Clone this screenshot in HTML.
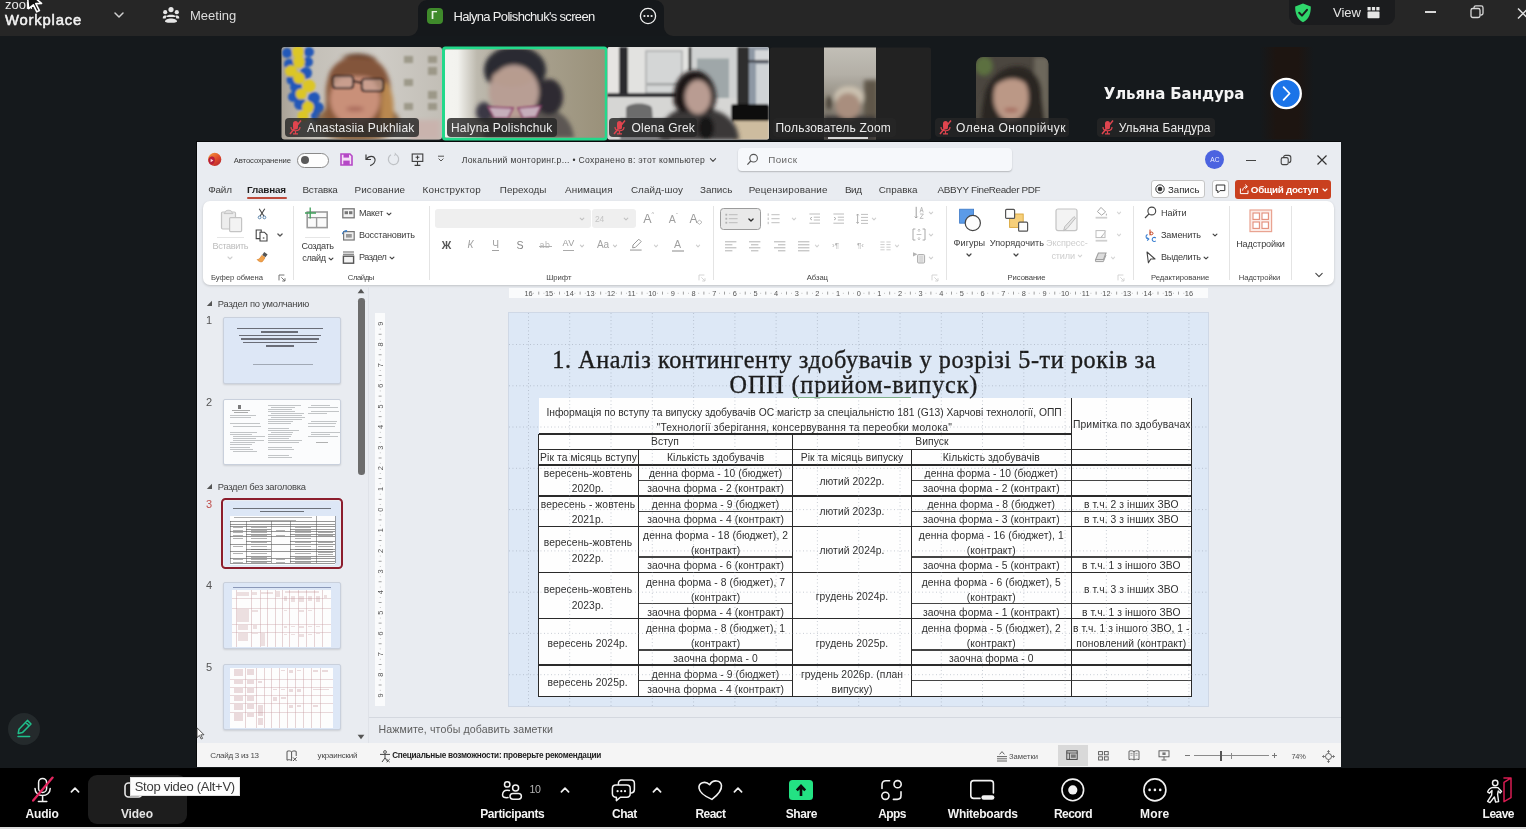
<!DOCTYPE html>
<html lang="uk">
<head>
<meta charset="utf-8">
<title>Zoom Workplace</title>
<style>
*{box-sizing:border-box;margin:0;padding:0}
html,body{width:1526px;height:829px;overflow:hidden;background:#15191c;font-family:"Liberation Sans",sans-serif;}
.abs{position:absolute}
#root{position:relative;width:1526px;height:829px;overflow:hidden;background:#15191c}
.t{position:absolute;white-space:nowrap;line-height:1}
#root{opacity:0.999}
</style>
</head>
<body>
<div id="root">
<div class="abs" style="left:0px;top:0px;width:1526px;height:36px;background:#262626;"></div>
<!-- top bar content -->
<div class="t" style="left:5px;top:-2.4px;font-size:13px;color:#e8e8e8;letter-spacing:0px">zoom</div>

<svg class="abs" style="left:25px;top:-9px" width="22" height="22" viewBox="0 0 22 22"><path d="M2 0 L16.5 12.4 L10.8 12.6 L14.4 19.6 L11.8 20.8 L8.4 13.8 L3.6 17.6 Z" fill="#111" stroke="#fff" stroke-width="1.6" stroke-linejoin="round"/></svg>
<svg class="abs" style="left:113px;top:10px" width="12" height="10" viewBox="0 0 12 10"><path d="M2 3 L6 7 L10 3" fill="none" stroke="#d0d0d0" stroke-width="1.5" stroke-linecap="round" stroke-linejoin="round"/></svg>
<svg class="abs" style="left:162px;top:6px" width="18" height="18" viewBox="0 0 18 18" fill="#e6e6e6"><circle cx="9" cy="3.6" r="2.6"/><circle cx="3.2" cy="6.2" r="2.1"/><circle cx="14.8" cy="6.2" r="2.1"/><path d="M4.5 10.5 C4.5 8 13.5 8 13.5 10.5 L13.5 11 L4.5 11Z"/><path d="M3 15.5 C3 11.5 15 11.5 15 15.5 C15 17.3 3 17.3 3 15.5Z"/><path d="M0.8 11.6 C0.8 9.6 3.6 9.3 4.6 9.8 L3.6 12.4 L0.8 12.4Z"/><path d="M17.2 11.6 C17.2 9.6 14.4 9.3 13.4 9.8 L14.4 12.4 L17.2 12.4Z"/></svg>
<div class="t" style="left:190px;top:9px;font-size:13px;color:#dcdcdc">Meeting</div>
<!-- screen tab -->
<div class="abs" style="left:418px;top:0;width:246px;height:36px;background:#15181b;border-radius:9px 9px 0 0"></div>
<svg class="abs" style="left:409px;top:27px" width="9" height="9" viewBox="0 0 9 9"><path d="M9 0 L9 9 L0 9 A9 9 0 0 0 9 0Z" fill="#15181b"/></svg>
<svg class="abs" style="left:664px;top:27px" width="9" height="9" viewBox="0 0 9 9"><path d="M0 0 L0 9 L9 9 A9 9 0 0 1 0 0Z" fill="#15181b"/></svg>
<div class="abs" style="left:427px;top:8px;width:16px;height:16px;border-radius:4px;background:#3f8a2b"></div>
<div class="t" style="left:431px;top:10px;font-size:11px;color:#e9f3e4;font-weight:700">Г</div>

<svg class="abs" style="left:639px;top:7px" width="18" height="18" viewBox="0 0 18 18"><circle cx="9" cy="9" r="7.6" fill="none" stroke="#f0f0f0" stroke-width="1.3"/><circle cx="5.4" cy="9" r="1.1" fill="#f0f0f0"/><circle cx="9" cy="9" r="1.1" fill="#f0f0f0"/><circle cx="12.6" cy="9" r="1.1" fill="#f0f0f0"/></svg>
<!-- right pill -->
<div class="abs" style="left:1289px;top:-8px;width:106px;height:33px;border-radius:9px;background:#1b1c1e"></div>
<svg class="abs" style="left:1294px;top:3px" width="18" height="20" viewBox="0 0 18 20"><path d="M9 0.5 L16.8 3.4 C17 10 15 16 9 19.3 C3 16 1 10 1.2 3.4Z" fill="#2fd66b"/><path d="M5.2 9.8 L8 12.6 L13 6.8" fill="none" stroke="#1b1c1e" stroke-width="2" stroke-linecap="round" stroke-linejoin="round"/></svg>
<div class="t" style="left:1333px;top:6px;font-size:13px;color:#e6e6e6">View</div>
<svg class="abs" style="left:1367px;top:7px" width="13" height="12" viewBox="0 0 13 12" fill="#e6e6e6"><rect x="0.5" y="0" width="3.2" height="3.4"/><rect x="4.9" y="0" width="3.2" height="3.4"/><rect x="9.3" y="0" width="3.2" height="3.4"/><rect x="0.5" y="4.6" width="12" height="6.6" rx="0.8"/></svg>
<div class="abs" style="left:1425px;top:11px;width:11px;height:1.6px;background:#d8d8d8"></div>
<svg class="abs" style="left:1470px;top:5px" width="14" height="14" viewBox="0 0 14 14" fill="none" stroke="#d8d8d8" stroke-width="1.3"><rect x="1" y="3.5" width="9" height="9" rx="1.8"/><path d="M4 3.2 V2.6 A1.8 1.8 0 0 1 5.8 0.9 H11.2 A1.8 1.8 0 0 1 13 2.7 V8.2 A1.8 1.8 0 0 1 11.2 10 H10.4"/></svg>
<svg class="abs" style="left:1517px;top:8px" width="12" height="11" viewBox="0 0 12 11"><path d="M1 0.5 L11 10.5 M11 0.5 L1 10.5" stroke="#e0e0e0" stroke-width="1.5"/></svg>

<div class="t" style='left:453.5px;top:9.75px;font-size:13px;color:#f0f0f0;letter-spacing:-0.675px;'>Halyna Polishchuk's screen</div>
<div class="t" style='left:5px;top:12.96px;font-size:14.8px;color:#f4f4f4;letter-spacing:0.818px;-webkit-text-stroke:0.5px #f4f4f4;'>Workplace</div>
<svg class="abs" style="left:270px;top:40px" width="1060" height="104" viewBox="270 40 1060 104">
<defs>
<filter id="b1" x="-20%" y="-20%" width="140%" height="140%"><feGaussianBlur stdDeviation="1.2"/></filter>
<filter id="b2" x="-20%" y="-20%" width="140%" height="140%"><feGaussianBlur stdDeviation="2.2"/></filter>
<filter id="b3" x="-20%" y="-20%" width="140%" height="140%"><feGaussianBlur stdDeviation="4"/></filter>
<clipPath id="c1"><rect x="281.5" y="47" width="160.5" height="92.5" rx="3"/></clipPath>
<clipPath id="c2"><rect x="445" y="49.5" width="159.5" height="88" rx="1"/></clipPath>
<clipPath id="c3"><rect x="607.5" y="47" width="161.5" height="92.5" rx="2"/></clipPath>
<clipPath id="c4"><rect x="824" y="47.5" width="52" height="92"/></clipPath>
<clipPath id="c5"><rect x="976" y="57" width="72.5" height="73" rx="7"/></clipPath>
<linearGradient id="g1" x1="0" x2="1" y1="0" y2="0"><stop offset="0" stop-color="#a9a296"/><stop offset="0.2" stop-color="#c4c0b8"/><stop offset="0.6" stop-color="#cfccc6"/><stop offset="1" stop-color="#c2beb6"/></linearGradient>
<linearGradient id="g2" x1="0" x2="1" y1="0" y2="0"><stop offset="0" stop-color="#f4f4f0"/><stop offset="0.08" stop-color="#f2f2ee"/><stop offset="0.2" stop-color="#bdb9ae"/><stop offset="0.5" stop-color="#aaa391"/><stop offset="1" stop-color="#9a917a"/></linearGradient>
<linearGradient id="g4" x1="0" x2="0" y1="0" y2="1"><stop offset="0" stop-color="#c2bfb7"/><stop offset="0.3" stop-color="#b3afa6"/><stop offset="0.6" stop-color="#8d877b"/><stop offset="1" stop-color="#5a554e"/></linearGradient>
</defs>
<!-- tile 1 -->
<g clip-path="url(#c1)">
<rect x="281" y="47" width="162" height="93" fill="url(#g1)"/>
<g filter="url(#b1)">
<g fill="#8f8b78" opacity="0.75"><rect x="404" y="56" width="9" height="7"/><rect x="404" y="79" width="9" height="7"/><rect x="404" y="103" width="9" height="7"/><rect x="428" y="67" width="9" height="8"/><rect x="428" y="91" width="9" height="8"/><rect x="428" y="56" width="9" height="7"/><rect x="428" y="103" width="9" height="7"/></g>
<g fill="#2358b8"><circle cx="287" cy="53" r="5"/><circle cx="309" cy="52" r="5"/><circle cx="289" cy="64" r="5"/><circle cx="308" cy="62" r="5"/><circle cx="306" cy="73" r="6"/><circle cx="291" cy="80" r="4.5"/><circle cx="296" cy="87" r="6"/><circle cx="293" cy="97" r="5"/><circle cx="300" cy="104" r="6"/><circle cx="314" cy="98" r="6"/><circle cx="318" cy="108" r="6"/><circle cx="316" cy="116" r="5"/></g>
<g fill="#dcc626"><circle cx="298" cy="52" r="6"/><circle cx="299" cy="62" r="6"/><circle cx="291" cy="71" r="6"/><circle cx="299" cy="78" r="6"/><circle cx="309" cy="86" r="6.5"/><circle cx="301" cy="94" r="5.5"/><circle cx="308" cy="107" r="6"/><circle cx="303" cy="116" r="5.5"/></g>
</g>
<g filter="url(#b2)">
<ellipse cx="358" cy="122" rx="42" ry="20" fill="#8d6a4a"/>
<path d="M326 98 C322 42 395 40 391 98 L393 124 L325 124Z" fill="#8a5a3a"/>
<path d="M383 80 C394 84 396 112 391 128 L380 128Z" fill="#b98850"/>
<ellipse cx="355" cy="99" rx="25" ry="26" fill="#c99079"/>
<path d="M328 82 C328 48 390 48 388 84 C372 75 346 73 328 82Z" fill="#83543a"/>
<path d="M340 58 C350 52 368 52 378 60 C366 57 352 56 340 58Z" fill="#5e3a28"/>
<ellipse cx="355" cy="109" rx="9" ry="2.6" fill="#a9695a"/>
</g>
<g filter="url(#b1)" fill="#c9a9a0" fill-opacity="0.55" stroke="#2b1d1d" stroke-width="1.7"><rect x="333" y="76" width="20" height="12" rx="3"/><rect x="362" y="79" width="21" height="12" rx="3"/><path d="M353 81 L362 83" fill="none"/></g>
<rect x="410" y="120" width="30" height="20" fill="#c9b3ad" filter="url(#b2)"/>
</g>
<!-- tile 2 -->
<rect x="443.5" y="48" width="162.5" height="91" rx="2" fill="#9a917a" stroke="#23d98b" stroke-width="3"/>
<g clip-path="url(#c2)">
<rect x="445" y="49" width="160" height="89" fill="url(#g2)"/>
<g filter="url(#b2)">
<path d="M484 138 C480 110 500 100 520 104 C548 104 572 112 574 138Z" fill="#5c5652"/>
<ellipse cx="515" cy="70" rx="31" ry="24" fill="#2b2a30"/>
<ellipse cx="549" cy="97" rx="14" ry="18" fill="#2e2b31"/>
<ellipse cx="484" cy="112" rx="8" ry="10" fill="#3a3744"/>
<ellipse cx="514" cy="92" rx="25" ry="27" fill="#b89e94"/>
<ellipse cx="512" cy="78" rx="20" ry="9" fill="#b79c8f"/>
</g>
<g filter="url(#b1)" fill="#c6aebb" stroke="#8e3f6c" stroke-width="1.6"><path d="M488 107 L513 108 L508 118 L494 118Z"/><path d="M518 108 L541 106 L536 117 L523 118Z"/></g>
</g>
<!-- tile 3 -->
<g clip-path="url(#c3)">
<rect x="607" y="47" width="163" height="93" fill="#dcdcda"/>
<g filter="url(#b1)">
<rect x="607" y="47" width="12" height="46" fill="#e6e4e2"/>
<rect x="628" y="47" width="60" height="46" fill="#e2e2e0"/>
<rect x="646" y="51" width="36" height="42" fill="#d4d6d6" stroke="#a9abab" stroke-width="1.5"/>
<rect x="647" y="83" width="34" height="2.5" fill="#a2a4a4"/>
<rect x="619" y="47" width="9" height="49" fill="#2b2b2e"/>
<rect x="607" y="93" width="70" height="4" fill="#2e2e30"/>
<rect x="688.5" y="47" width="3" height="24" fill="#333"/>
<rect x="692" y="47" width="45" height="58" fill="#d0d2d2"/>
<rect x="697" y="58.5" width="32" height="41" fill="#9fa7a9"/>
<rect x="737" y="47" width="12" height="59" fill="#2d2d2d"/>
<rect x="749" y="47" width="20" height="59" fill="#8e98a4"/>
<rect x="755" y="50" width="14" height="11" fill="#d5d8da"/>
<rect x="756" y="64" width="13" height="40" fill="#cfd3d6"/>
<rect x="749" y="60" width="20" height="2.5" fill="#3a3e44"/>
<rect x="607" y="98" width="130" height="42" fill="#d6d6d4"/>
<path d="M626 108 C628 102 650 102 652 108 L653 122 L626 122Z" fill="#6c6c6c"/>
<rect x="620" y="118" width="50" height="22" fill="#77777a"/>
<rect x="731" y="104" width="38" height="19" rx="3" fill="#0d0d0d"/>
<rect x="733" y="121" width="36" height="19" fill="#cdbc9f"/>
</g>
<g filter="url(#b2)">
<path d="M660 140 C660 112 680 106 698 108 C722 108 738 120 739 140Z" fill="#3b3737"/>
<path d="M674 104 C670 60 716 60 716 100 L712 112 L680 112Z" fill="#1f1819"/>
<ellipse cx="698" cy="97" rx="13" ry="17" fill="#b99c92"/>
<ellipse cx="706" cy="128" rx="8" ry="12" fill="#151313"/>
</g>
</g>
<!-- tile 4 -->
<rect x="770" y="47.5" width="161" height="92" rx="2" fill="#222222"/>
<g clip-path="url(#c4)">
<rect x="824" y="47" width="52" height="93" fill="url(#g4)"/>
<g filter="url(#b2)">
<rect x="864" y="80" width="14" height="60" fill="#5e564a"/>
<rect x="824" y="116" width="52" height="24" fill="#3b3939"/>
<ellipse cx="849" cy="97" rx="15" ry="11" fill="#cbc1b0"/>
<ellipse cx="848" cy="106" rx="12.5" ry="13" fill="#a98e7e"/>
<ellipse cx="829" cy="103" rx="3" ry="7" fill="#4a4238"/>
</g>
<rect x="828" y="137" width="40" height="2" fill="#d8d8d8"/>
</g>
<!-- tile 5 -->
<g clip-path="url(#c5)">
<rect x="976" y="57" width="73" height="73" fill="#4b463f"/>
<g filter="url(#b2)">
<ellipse cx="984" cy="66" rx="9" ry="10" fill="#5c7040"/>
<rect x="1034" y="57" width="15" height="73" fill="#6d675b"/>
<ellipse cx="990" cy="110" rx="10" ry="20" fill="#5a564e"/>
<path d="M982 130 C972 56 1044 48 1042 98 L1046 130Z" fill="#2a2523"/>
<ellipse cx="1011" cy="97" rx="17.5" ry="24" fill="#bb9886"/>
<path d="M991 90 C992 62 1030 62 1031 90 C1022 74 1002 76 991 90Z" fill="#2a2523"/>
<ellipse cx="1011" cy="110" rx="7" ry="2" fill="#a26356"/>
</g>
</g>
<!-- brownish next tile hint -->
<defs><linearGradient id="gb" x1="0" x2="1" y1="0" y2="0"><stop offset="0" stop-color="#1d1511" stop-opacity="0"/><stop offset="0.3" stop-color="#1d1511" stop-opacity="1"/><stop offset="0.7" stop-color="#1d1511" stop-opacity="1"/><stop offset="1" stop-color="#1d1511" stop-opacity="0"/></linearGradient></defs><rect x="1260" y="47" width="54" height="92.5" fill="url(#gb)"/>
<!-- next button -->
<circle cx="1286.2" cy="93.5" r="14.6" fill="#1b74e8" stroke="#ffffff" stroke-width="2.3"/>
<path d="M1283.6 87.2 L1289.6 93.5 L1283.6 99.8" fill="none" stroke="#fff" stroke-width="1.8" stroke-linecap="round" stroke-linejoin="round"/>
</svg>

<div class="abs" style="left:285px;top:117.5px;width:134px;height:19.5px;background:rgba(38,38,38,0.82);border-radius:4px"></div>
<svg class="abs" style="left:288px;top:119px" width="15" height="17" viewBox="0 0 15 17"><rect x="5" y="2" width="5" height="8.5" rx="2.5" fill="#e0454f"/><path d="M3 8 C3 13 12 13 12 8 M7.5 12 V14.5 M5 14.8 H10" fill="none" stroke="#e0454f" stroke-width="1.2"/><path d="M2 15 L13 1.5" stroke="#e0454f" stroke-width="1.5"/></svg>
<div class="t" style='left:307px;top:121.70px;font-size:12px;color:#ececec;letter-spacing:0.181px;'>Anastasiia Pukhliak</div>
<div class="abs" style="left:447px;top:117.5px;width:110px;height:19.5px;background:rgba(38,38,38,0.82);border-radius:4px"></div>
<div class="t" style='left:451px;top:121.70px;font-size:12px;color:#ececec;letter-spacing:0.164px;'>Halyna Polishchuk</div>
<div class="abs" style="left:609px;top:117.5px;width:88px;height:19.5px;background:rgba(38,38,38,0.82);border-radius:4px"></div>
<svg class="abs" style="left:612px;top:119px" width="15" height="17" viewBox="0 0 15 17"><rect x="5" y="2" width="5" height="8.5" rx="2.5" fill="#e0454f"/><path d="M3 8 C3 13 12 13 12 8 M7.5 12 V14.5 M5 14.8 H10" fill="none" stroke="#e0454f" stroke-width="1.2"/><path d="M2 15 L13 1.5" stroke="#e0454f" stroke-width="1.5"/></svg>
<div class="t" style='left:631.5px;top:121.70px;font-size:12px;color:#ececec;letter-spacing:0.214px;'>Olena Grek</div>
<div class="abs" style="left:772.5px;top:117.5px;width:123.5px;height:19.5px;background:rgba(38,38,38,0.82);border-radius:4px"></div>
<div class="t" style='left:775.5px;top:121.70px;font-size:12px;color:#ececec;letter-spacing:0.212px;'>Пользователь Zoom</div>
<div class="abs" style="left:934.5px;top:117.5px;width:134.5px;height:19.5px;background:rgba(38,38,38,0.82);border-radius:4px"></div>
<svg class="abs" style="left:937.5px;top:119px" width="15" height="17" viewBox="0 0 15 17"><rect x="5" y="2" width="5" height="8.5" rx="2.5" fill="#e0454f"/><path d="M3 8 C3 13 12 13 12 8 M7.5 12 V14.5 M5 14.8 H10" fill="none" stroke="#e0454f" stroke-width="1.2"/><path d="M2 15 L13 1.5" stroke="#e0454f" stroke-width="1.5"/></svg>
<div class="t" style='left:956px;top:121.70px;font-size:12px;color:#ececec;letter-spacing:0.488px;'>Олена Онопрійчук</div>
<div class="abs" style="left:1096.5px;top:117.5px;width:118px;height:19.5px;background:rgba(38,38,38,0.82);border-radius:4px"></div>
<svg class="abs" style="left:1099.5px;top:119px" width="15" height="17" viewBox="0 0 15 17"><rect x="5" y="2" width="5" height="8.5" rx="2.5" fill="#e0454f"/><path d="M3 8 C3 13 12 13 12 8 M7.5 12 V14.5 M5 14.8 H10" fill="none" stroke="#e0454f" stroke-width="1.2"/><path d="M2 15 L13 1.5" stroke="#e0454f" stroke-width="1.5"/></svg>
<div class="t" style='left:1118.7px;top:121.70px;font-size:12px;color:#ececec;letter-spacing:0.092px;'>Ульяна Бандура</div>
<div class="t" style='left:1103.7px;top:86.75px;font-size:15px;color:#f4f4f4;font-weight:700;font-family:"DejaVu Sans","Liberation Sans",sans-serif;letter-spacing:-0.110px;'>Ульяна Бандура</div>
<div class="abs" style="left:197px;top:142px;width:1143.5px;height:625px;background:#e9ecf1;box-shadow:-0.6px -0.6px 0 0.4px #07090a"></div>
<svg class="abs" style="left:207px;top:152px" width="15" height="15" viewBox="0 0 15 15"><defs><linearGradient id="pl" x1="0.1" y1="0" x2="0.9" y2="1"><stop offset="0" stop-color="#f39a3e"/><stop offset="0.5" stop-color="#e3502a"/><stop offset="1" stop-color="#b3202f"/></linearGradient></defs><circle cx="7.7" cy="7.4" r="6.6" fill="url(#pl)"/><path d="M1.6 9.8 C0.8 6.4 3 4.2 5.6 4.6 C7.6 5 8.2 7 7.8 9 C7.4 11.4 5.4 13 3.6 12.6 C2.6 12 2 11 1.6 9.8Z" fill="#b81f38"/><path d="M3.6 6.8 L6.4 8.5 L3.6 10.3Z" fill="#fbd5dc"/></svg>
<div class="t" style='left:233.7px;top:156.66px;font-size:7.7px;color:#3a3a3a;letter-spacing:-0.094px;'>Автосохранение</div>
<div class="abs" style="left:297px;top:152.5px;width:32px;height:15px;border-radius:8px;background:#fdfdfd;border:1px solid #8a8a8a"></div><div class="abs" style="left:300.5px;top:155.7px;width:8.6px;height:8.6px;border-radius:5px;background:#5a5a5a"></div>
<svg class="abs" style="left:340px;top:153px" width="13" height="13" viewBox="0 0 13 13"><path d="M1 1 H10 L12 3 V12 H1Z" fill="#f4def6" stroke="#b548c6" stroke-width="1.6"/><rect x="3.5" y="1" width="5.5" height="3.6" fill="#b548c6"/><rect x="3.3" y="7.6" width="6.4" height="4.4" fill="#b548c6"/></svg>
<svg class="abs" style="left:363px;top:152px" width="15" height="15" viewBox="0 0 15 15"><path d="M3 2.5 V7.5 H8" fill="none" stroke="#3c3c3c" stroke-width="1.2"/><path d="M3.2 7.3 C6 3.2 11 3.4 12 7.2 C12.6 10 10 12.6 7.2 13.6" fill="none" stroke="#3c3c3c" stroke-width="1.2"/></svg>
<svg class="abs" style="left:386px;top:152px" width="15" height="15" viewBox="0 0 15 15"><path d="M9.5 2.2 C12.8 3.6 13.6 8 11.4 10.8 C9 13.6 4.6 13 3 9.8 C2 7.4 2.6 4.4 5 2.8" fill="none" stroke="#bfc2c6" stroke-width="1.2"/><path d="M9 0.8 L9.8 2.6 L8 3.4" fill="none" stroke="#bfc2c6" stroke-width="1"/></svg>
<svg class="abs" style="left:411px;top:153px" width="13" height="14" viewBox="0 0 13 14"><rect x="1.2" y="1" width="10.6" height="7.4" fill="none" stroke="#3c3c3c" stroke-width="1.1"/><path d="M6.5 8.4 V12 M3.6 12.4 H9.4 M6.5 2.6 V6.4 M4.6 4.2 H8.4" stroke="#3c3c3c" stroke-width="1.1" fill="none"/></svg>
<svg class="abs" style="left:437px;top:155px" width="8" height="8" viewBox="0 0 8 8"><path d="M1 1.2 H7" stroke="#555" stroke-width="1"/><path d="M1.6 3.6 L4 6 L6.4 3.6" fill="none" stroke="#555" stroke-width="1"/></svg>
<div class="t" style='left:461.8px;top:156.17px;font-size:8.6px;color:#3a3a3a;letter-spacing:0.327px;'>Локальний монторинг.р... • Сохранено в: этот компьютер</div>
<svg class="abs" style="left:708.6px;top:157.2px" width="8" height="6" viewBox="0 0 8 6"><path d="M1.4 1.7 L4 4.3 L6.6 1.7" fill="none" stroke="#444" stroke-width="1.1" stroke-linecap="round" stroke-linejoin="round"/></svg>
<div class="abs" style="left:737.5px;top:148.4px;width:274px;height:22.8px;border-radius:4px;background:#f6f8fb;box-shadow:0 1px 1.5px rgba(0,0,0,0.22)"></div>
<svg class="abs" style="left:746px;top:153px" width="13" height="13" viewBox="0 0 13 13"><circle cx="7.6" cy="5.2" r="3.8" fill="none" stroke="#555" stroke-width="1.1"/><path d="M4.8 8 L1.4 11.6" stroke="#555" stroke-width="1.2"/></svg>
<div class="t" style='left:768.2px;top:155.31px;font-size:9.8px;color:#666;letter-spacing:0.429px;'>Поиск</div>
<div class="abs" style="left:1205.3px;top:150.4px;width:19px;height:19px;border-radius:10px;background:#4b63e0"></div>
<div class="t" style='left:1210.2px;top:157.27px;font-size:6.6px;color:#e9ecff;letter-spacing:0.114px;'>AC</div>
<div class="abs" style="left:1246px;top:159.6px;width:9.5px;height:1.2px;background:#444;"></div>
<svg class="abs" style="left:1280px;top:154px" width="12" height="12" viewBox="0 0 12 12"><rect x="1.2" y="3.6" width="7" height="7" rx="1.6" fill="none" stroke="#444" stroke-width="1.1"/><path d="M3.6 3.4 C3.6 2 4.4 1.4 5.6 1.4 H8.6 C10 1.4 10.8 2.2 10.8 3.6 V6.6 C10.8 7.8 10.2 8.6 8.8 8.6" fill="none" stroke="#444" stroke-width="1.1"/></svg>
<svg class="abs" style="left:1316px;top:154px" width="12" height="12" viewBox="0 0 12 12"><path d="M1.5 1.5 L10.5 10.5 M10.5 1.5 L1.5 10.5" stroke="#333" stroke-width="1.2"/></svg>
<div class="t" style='left:208.2px;top:185.06px;font-size:9.9px;color:#3b3b3b;letter-spacing:-0.170px;'>Файл</div>
<div class="t" style='left:302.5px;top:185.06px;font-size:9.9px;color:#3b3b3b;letter-spacing:-0.246px;'>Вставка</div>
<div class="t" style='left:354.6px;top:185.06px;font-size:9.9px;color:#3b3b3b;letter-spacing:0.085px;'>Рисование</div>
<div class="t" style='left:422.6px;top:185.06px;font-size:9.9px;color:#3b3b3b;letter-spacing:0.172px;'>Конструктор</div>
<div class="t" style='left:499.8px;top:185.06px;font-size:9.9px;color:#3b3b3b;letter-spacing:0.046px;'>Переходы</div>
<div class="t" style='left:565.1px;top:185.06px;font-size:9.9px;color:#3b3b3b;letter-spacing:0.155px;'>Анимация</div>
<div class="t" style='left:630.9px;top:185.06px;font-size:9.9px;color:#3b3b3b;letter-spacing:0.100px;'>Слайд-шоу</div>
<div class="t" style='left:700px;top:185.06px;font-size:9.9px;color:#3b3b3b;'>Запись</div>
<div class="t" style='left:748.7px;top:185.06px;font-size:9.9px;color:#3b3b3b;letter-spacing:0.202px;'>Рецензирование</div>
<div class="t" style='left:844.9px;top:185.06px;font-size:9.9px;color:#3b3b3b;letter-spacing:-0.392px;'>Вид</div>
<div class="t" style='left:878.7px;top:185.06px;font-size:9.9px;color:#3b3b3b;letter-spacing:0.007px;'>Справка</div>
<div class="t" style='left:937.6px;top:185.06px;font-size:9.9px;color:#3b3b3b;letter-spacing:-0.350px;'>ABBYY FineReader PDF</div>
<div class="t" style='left:247px;top:185.06px;font-size:9.9px;color:#1f1f1f;font-weight:700;letter-spacing:-0.196px;'>Главная</div>
<div class="abs" style="left:247px;top:196.5px;width:40px;height:2.3px;background:#bd4a3a;border-radius:1px"></div>
<div class="abs" style="left:1151px;top:180px;width:54px;height:18px;border-radius:3px;background:#fdfdfd;border:1px solid #c6c6c6"></div>
<svg class="abs" style="left:1155px;top:184px" width="10" height="10" viewBox="0 0 10 10"><circle cx="5" cy="5" r="4.2" fill="none" stroke="#333" stroke-width="1"/><circle cx="5" cy="5" r="2.3" fill="#333"/></svg>
<div class="t" style='left:1168px;top:185.02px;font-size:9.6px;color:#2b2b2b;'>Запись</div>
<div class="abs" style="left:1211.5px;top:180px;width:17.5px;height:18px;border-radius:3px;background:#fdfdfd;border:1px solid #c6c6c6"></div>
<svg class="abs" style="left:1215px;top:184px" width="11" height="10" viewBox="0 0 11 10"><path d="M1.2 1 H9.8 V6.6 H5 L2.8 8.8 V6.6 H1.2Z" fill="none" stroke="#333" stroke-width="1"/></svg>
<div class="abs" style="left:1235px;top:180px;width:96px;height:18.5px;border-radius:3px;background:#c9401f"></div>
<svg class="abs" style="left:1239px;top:183px" width="11" height="12" viewBox="0 0 11 12"><path d="M1.4 5.4 V10.6 H9 V7.4" fill="none" stroke="#fff" stroke-width="1"/><path d="M3.6 7.6 C3.8 4.8 5.8 3.6 7.8 3.6 M6.2 1.6 L8.4 3.6 L6.2 5.6" fill="none" stroke="#fff" stroke-width="1"/></svg>
<div class="t" style='left:1250.8px;top:184.91px;font-size:9.8px;color:#fff;font-weight:700;letter-spacing:-0.245px;'>Общий доступ</div>
<svg class="abs" style="left:1321.3px;top:187px" width="8" height="6" viewBox="0 0 8 6"><path d="M2 2.0 L4 4.0 L6 2.0" fill="none" stroke="#fff" stroke-width="1.1" stroke-linecap="round" stroke-linejoin="round"/></svg>
<div class="abs" style="left:203px;top:200.6px;width:1130.6px;height:84.2px;border-radius:7px;background:#fff;box-shadow:0 1px 2.5px rgba(0,0,0,0.18)"></div>
<div class="abs" style="left:293.4px;top:206px;width:1px;height:74px;background:#e4e4e4;"></div>
<div class="abs" style="left:429.3px;top:206px;width:1px;height:74px;background:#e4e4e4;"></div>
<div class="abs" style="left:713.4px;top:206px;width:1px;height:74px;background:#e4e4e4;"></div>
<div class="abs" style="left:945.8px;top:206px;width:1px;height:74px;background:#e4e4e4;"></div>
<div class="abs" style="left:1132.6px;top:206px;width:1px;height:74px;background:#e4e4e4;"></div>
<div class="abs" style="left:1229.1px;top:206px;width:1px;height:74px;background:#e4e4e4;"></div>
<div class="abs" style="left:1291.4px;top:206px;width:1px;height:74px;background:#e4e4e4;"></div>
<svg class="abs" style="left:220px;top:208px" width="24" height="25" viewBox="0 0 24 25"><rect x="1.5" y="4" width="14" height="17" rx="1.2" fill="#ededed" stroke="#c4c4c4" stroke-width="1.2"/><path d="M5 4.4 C5 1.6 12 1.6 12 4.4 L13 5.6 H4Z" fill="#e2e2e2" stroke="#c4c4c4" stroke-width="1"/><rect x="9.6" y="9.6" width="12" height="14" rx="1" fill="#f3f3f3" stroke="#c4c4c4" stroke-width="1.2"/></svg>
<div class="abs" style="left:217px;top:237.3px;width:27px;height:1px;background:#e6e6e6;"></div>
<div class="t" style='left:212.6px;top:242.09px;font-size:9.1px;color:#bdbdbd;letter-spacing:-0.393px;'>Вставить</div>
<svg class="abs" style="left:225.6px;top:254.60000000000002px" width="8" height="6" viewBox="0 0 8 6"><path d="M2 2.0 L4 4.0 L6 2.0" fill="none" stroke="#cfcfcf" stroke-width="1.1" stroke-linecap="round" stroke-linejoin="round"/></svg>
<svg class="abs" style="left:256px;top:207.5px" width="12" height="12" viewBox="0 0 12 12"><path d="M3.2 0.8 L8 8.2 M8.8 0.8 L4 8.2" stroke="#444" stroke-width="1.1"/><circle cx="3.6" cy="9.4" r="1.4" fill="none" stroke="#5b86ad" stroke-width="1"/><circle cx="8.4" cy="9.4" r="1.4" fill="none" stroke="#5b86ad" stroke-width="1"/></svg>
<svg class="abs" style="left:255px;top:228.5px" width="14" height="13" viewBox="0 0 14 13"><path d="M1.2 1 H6.2 V9.6 H1.2Z" fill="#fff" stroke="#444" stroke-width="1.1"/><path d="M5 3.2 H9.4 L12 5.8 V12 H5Z" fill="#fff" stroke="#444" stroke-width="1.1"/><path d="M7.6 9 H9.6 M8.6 8 V10" stroke="#777" stroke-width="0.8"/></svg>
<svg class="abs" style="left:276px;top:232.2px" width="8" height="6" viewBox="0 0 8 6"><path d="M1.9 1.95 L4 4.05 L6.1 1.95" fill="none" stroke="#555" stroke-width="1.3" stroke-linecap="round" stroke-linejoin="round"/></svg>
<svg class="abs" style="left:256px;top:250.5px" width="13" height="12" viewBox="0 0 13 12"><path d="M8.2 1 L11.6 3.4 L9.4 6.2 L6.2 4Z" fill="#555"/><path d="M5.8 4.4 L9 6.8 L6.4 10.6 C4.6 11.4 2.4 10.4 1.2 8.6 C3 8.6 4.6 6.6 5.8 4.4Z" fill="#f2a24a" stroke="#d9812a" stroke-width="0.7"/></svg>
<div class="t" style='left:211px;top:273.96px;font-size:7.7px;color:#444;letter-spacing:-0.029px;'>Буфер обмена</div>
<svg class="abs" style="left:278px;top:274px" width="8" height="8" viewBox="0 0 8 8"><path d="M1 6.4 V1 H6.4" fill="none" stroke="#666" stroke-width="0.9"/><path d="M3.4 3.4 L7 7 M7 4.2 V7 H4.2" fill="none" stroke="#666" stroke-width="0.9"/></svg>
<svg class="abs" style="left:304px;top:206px" width="26" height="24" viewBox="0 0 26 24"><rect x="3.2" y="6" width="20" height="15.6" fill="#fafafa" stroke="#9b9b9b" stroke-width="1.6"/><path d="M3.2 11.6 H23.2 M12.6 11.6 V21.6" stroke="#9b9b9b" stroke-width="1.4"/><path d="M6.2 1.6 V12.6 M1 7 H12" stroke="#3f9f5a" stroke-width="1.3"/></svg>
<div class="abs" style="left:305px;top:237.3px;width:25px;height:1px;background:#e6e6e6;"></div>
<div class="t" style='left:301.4px;top:241.69px;font-size:9.1px;color:#3b3b3b;letter-spacing:-0.323px;'>Создать</div>
<div class="t" style='left:302.2px;top:253.89px;font-size:9.1px;color:#3b3b3b;letter-spacing:-0.339px;'>слайд</div>
<svg class="abs" style="left:326.5px;top:255.60000000000002px" width="8" height="6" viewBox="0 0 8 6"><path d="M2.1 2.05 L4 3.95 L5.9 2.05" fill="none" stroke="#444" stroke-width="1.2" stroke-linecap="round" stroke-linejoin="round"/></svg>
<svg class="abs" style="left:341.5px;top:207.5px" width="13" height="11" viewBox="0 0 13 11"><rect x="0.8" y="0.8" width="11.4" height="9" fill="#f2f2f2" stroke="#777" stroke-width="1.3"/><rect x="2.6" y="3.2" width="3.4" height="3" fill="#777"/><rect x="7" y="3.2" width="3.4" height="3" fill="#777"/></svg>
<div class="t" style='left:358.9px;top:209.09px;font-size:9.1px;color:#3b3b3b;letter-spacing:-0.290px;'>Макет</div>
<svg class="abs" style="left:384.7px;top:210.6px" width="8" height="6" viewBox="0 0 8 6"><path d="M2.1 2.05 L4 3.95 L5.9 2.05" fill="none" stroke="#444" stroke-width="1.2" stroke-linecap="round" stroke-linejoin="round"/></svg>
<svg class="abs" style="left:341.5px;top:229.5px" width="13" height="11" viewBox="0 0 13 11"><rect x="1.6" y="1.6" width="10.6" height="8.4" fill="#eee" stroke="#777" stroke-width="1.2"/><rect x="4" y="4" width="5.8" height="3.6" fill="#999"/><path d="M0.4 4.2 C0.6 1.4 3 0.4 4.6 0.8 M3.2 -0.2 L4.8 0.8 L3.6 2.2" fill="none" stroke="#2f7bd0" stroke-width="1"/></svg>
<div class="t" style='left:358.9px;top:231.09px;font-size:9.1px;color:#3b3b3b;letter-spacing:-0.203px;'>Восстановить</div>
<svg class="abs" style="left:341.5px;top:250.5px" width="13" height="13" viewBox="0 0 13 13"><path d="M1 1 H12 M1 3.2 H12" stroke="#666" stroke-width="1.1"/><rect x="1.4" y="5.2" width="10.2" height="7" fill="#f4f4f4" stroke="#555" stroke-width="1.4"/></svg>
<div class="t" style='left:358.9px;top:253.09px;font-size:9.1px;color:#3b3b3b;letter-spacing:-0.427px;'>Раздел</div>
<svg class="abs" style="left:387.9px;top:254.8px" width="8" height="6" viewBox="0 0 8 6"><path d="M2.1 2.05 L4 3.95 L5.9 2.05" fill="none" stroke="#444" stroke-width="1.2" stroke-linecap="round" stroke-linejoin="round"/></svg>
<div class="t" style='left:347.8px;top:274.36px;font-size:7.7px;color:#444;letter-spacing:-0.438px;'>Слайды</div>
<div class="abs" style="left:435.2px;top:209.4px;width:156px;height:19px;border-radius:3px;background:#efefef"></div><div class="abs" style="left:592.4px;top:209.4px;width:44px;height:19px;border-radius:3px;background:#efefef"></div>
<svg class="abs" style="left:577.7px;top:216.4px" width="8" height="6" viewBox="0 0 8 6"><path d="M2.2 2.1 L4 3.9 L5.8 2.1" fill="none" stroke="#c2c2c2" stroke-width="1.1" stroke-linecap="round" stroke-linejoin="round"/></svg>
<svg class="abs" style="left:621.5px;top:216.4px" width="8" height="6" viewBox="0 0 8 6"><path d="M2.2 2.1 L4 3.9 L5.8 2.1" fill="none" stroke="#c2c2c2" stroke-width="1.1" stroke-linecap="round" stroke-linejoin="round"/></svg>
<div class="t" style='left:595px;top:215.28px;font-size:8.4px;color:#c4c4c4;letter-spacing:-0.214px;'>24</div>
<div class="t" style='left:643.2px;top:212.82px;font-size:12.5px;color:#9a9a9a;letter-spacing:-0.544px;'>A</div>
<div class="t" style='left:651.5px;top:212.27px;font-size:5.5px;color:#aaa;'>^</div>
<div class="t" style='left:668.8px;top:214.47px;font-size:10.6px;color:#a0a0a0;letter-spacing:-0.478px;'>A</div>
<div class="t" style='left:676px;top:212.67px;font-size:5.5px;color:#aaa;'>ˇ</div>
<div class="t" style='left:689.4px;top:213.10px;font-size:12px;color:#9a9a9a;letter-spacing:-0.416px;'>A</div>
<svg class="abs" style="left:696px;top:219px" width="7" height="6" viewBox="0 0 7 6"><path d="M1 3.4 L3.4 1 L6 3.2 L3.6 5.4Z" fill="none" stroke="#aaa" stroke-width="0.8"/></svg>
<div class="t" style='left:441.7px;top:240.12px;font-size:10.5px;color:#555;font-weight:700;letter-spacing:0.900px;'>Ж</div>
<div class="t" style='left:467.6px;top:240.29px;font-size:10.2px;color:#a2a2a2;letter-spacing:-0.016px;font-style:italic;'>К</div>
<div class="t" style='left:492.2px;top:239.69px;font-size:10.2px;color:#a2a2a2;letter-spacing:-0.597px;'>Ч</div>
<div class="abs" style="left:491.5px;top:250.2px;width:7.8px;height:0.9px;background:#a2a2a2;"></div>
<div class="t" style='left:516.4px;top:240.07px;font-size:10.6px;color:#868686;letter-spacing:-0.478px;'>S</div>
<div class="t" style='left:539.6px;top:241.26px;font-size:8.8px;color:#b5b5b5;letter-spacing:0.502px;'>ab</div>
<div class="abs" style="left:538.5px;top:246px;width:13px;height:0.9px;background:#b0b0b0;"></div>
<div class="t" style='left:562.4px;top:239.35px;font-size:9px;color:#9c9c9c;letter-spacing:0.528px;'>AV</div>
<div class="abs" style="left:563px;top:250px;width:11px;height:0.8px;background:#aaa;"></div>
<svg class="abs" style="left:577.6px;top:242.6px" width="8" height="6" viewBox="0 0 8 6"><path d="M2.4 2.2 L4 3.8 L5.6 2.2" fill="none" stroke="#c8c8c8" stroke-width="1.1" stroke-linecap="round" stroke-linejoin="round"/></svg>
<div class="t" style='left:597px;top:240.40px;font-size:10px;color:#a2a2a2;letter-spacing:-0.217px;'>Aa</div>
<svg class="abs" style="left:610.7px;top:242.8px" width="8" height="6" viewBox="0 0 8 6"><path d="M2.4 2.2 L4 3.8 L5.6 2.2" fill="none" stroke="#c8c8c8" stroke-width="1.1" stroke-linecap="round" stroke-linejoin="round"/></svg>
<svg class="abs" style="left:629px;top:238px" width="14" height="14" viewBox="0 0 14 14"><path d="M9.8 1.2 L12.2 3.6 L6.4 9.4 L3.6 9.8 L4 7Z" fill="none" stroke="#999" stroke-width="1"/><rect x="1" y="11.2" width="11.6" height="1.8" fill="#c4c4c4"/></svg>
<svg class="abs" style="left:652px;top:242.8px" width="8" height="6" viewBox="0 0 8 6"><path d="M2.4 2.2 L4 3.8 L5.6 2.2" fill="none" stroke="#cfcfcf" stroke-width="1.1" stroke-linecap="round" stroke-linejoin="round"/></svg>
<div class="t" style='left:674px;top:238.67px;font-size:10.6px;color:#a0a0a0;letter-spacing:0.922px;'>A</div>
<div class="abs" style="left:671.6px;top:250px;width:12.6px;height:1.8px;background:#c4c4c4;"></div>
<svg class="abs" style="left:694.2px;top:242.8px" width="8" height="6" viewBox="0 0 8 6"><path d="M2.4 2.2 L4 3.8 L5.6 2.2" fill="none" stroke="#cfcfcf" stroke-width="1.1" stroke-linecap="round" stroke-linejoin="round"/></svg>
<div class="t" style='left:546.3px;top:274.06px;font-size:7.7px;color:#444;letter-spacing:-0.019px;'>Шрифт</div>
<svg class="abs" style="left:698px;top:274px" width="8" height="8" viewBox="0 0 8 8"><path d="M1 6.4 V1 H6.4" fill="none" stroke="#d0d0d0" stroke-width="0.9"/><path d="M3.4 3.4 L7 7 M7 4.2 V7 H4.2" fill="none" stroke="#d0d0d0" stroke-width="0.9"/></svg>
<div class="abs" style="left:720.2px;top:208.2px;width:40.6px;height:21.4px;border-radius:3.5px;background:#e9e9e9;border:1px solid #9c9c9c"></div>
<svg class="abs" style="left:724.5px;top:212.5px" width="14" height="12" viewBox="0 0 14 12"><g fill="#b0b0b0"><rect x="0.4" y="0.8" width="1.8" height="1.8"/><rect x="0.4" y="4.8" width="1.8" height="1.8"/><rect x="0.4" y="8.8" width="1.8" height="1.8"/></g><path d="M3.8 1.7 H12.6 M3.8 5.7 H12.6 M3.8 9.7 H12.6" stroke="#bcbcbc" stroke-width="1"/></svg>
<svg class="abs" style="left:747.4px;top:216.6px" width="8" height="6" viewBox="0 0 8 6"><path d="M1.9 1.95 L4 4.05 L6.1 1.95" fill="none" stroke="#2e2e2e" stroke-width="1.3" stroke-linecap="round" stroke-linejoin="round"/></svg>
<svg class="abs" style="left:766.5px;top:212.5px" width="14" height="12" viewBox="0 0 14 12"><path d="M1.2 0.4 V2.8 M1.2 4.6 V7 M1.2 8.8 V11.2" stroke="#b4b4b4" stroke-width="0.9"/><path d="M4.4 1.7 H12.6 M4.4 5.7 H12.6 M4.4 9.7 H12.6" stroke="#c0c0c0" stroke-width="1"/></svg>
<svg class="abs" style="left:789.8px;top:216.2px" width="8" height="6" viewBox="0 0 8 6"><path d="M2.3 2.15 L4 3.85 L5.7 2.15" fill="none" stroke="#cfcfcf" stroke-width="1.1" stroke-linecap="round" stroke-linejoin="round"/></svg>
<svg class="abs" style="left:808.5px;top:212.5px" width="12" height="12" viewBox="0 0 12 12"><path d="M0.4 1 H11 M4.8 4.2 H11 M4.8 7 H11 M0.4 10.2 H11" stroke="#bdbdbd" stroke-width="1"/><path d="M3 4.2 L1 5.6 L3 7" fill="none" stroke="#aaa" stroke-width="0.9"/></svg>
<svg class="abs" style="left:833px;top:212.5px" width="12" height="12" viewBox="0 0 12 12"><path d="M0.4 1 H11 M4.8 4.2 H11 M4.8 7 H11 M0.4 10.2 H11" stroke="#bdbdbd" stroke-width="1"/><path d="M1 4.2 L3 5.6 L1 7" fill="none" stroke="#aaa" stroke-width="0.9"/></svg>
<svg class="abs" style="left:856px;top:212.5px" width="13" height="12" viewBox="0 0 13 12"><path d="M1.6 1 V10.4 M0.4 2.4 L1.6 1 L2.8 2.4 M0.4 9 L1.6 10.4 L2.8 9" fill="none" stroke="#aaa" stroke-width="0.9"/><path d="M5 1.4 H12 M5 4.4 H12 M5 7.4 H12 M5 10.4 H12" stroke="#c0c0c0" stroke-width="1"/></svg>
<svg class="abs" style="left:869.6px;top:216.2px" width="8" height="6" viewBox="0 0 8 6"><path d="M2.3 2.15 L4 3.85 L5.7 2.15" fill="none" stroke="#cfcfcf" stroke-width="1.1" stroke-linecap="round" stroke-linejoin="round"/></svg>
<svg class="abs" style="left:913.5px;top:206px" width="11" height="14" viewBox="0 0 11 14"><path d="M2.2 0.8 V12 M0.8 10.6 L2.2 12 L3.6 10.6" fill="none" stroke="#9f9f9f" stroke-width="1"/><path d="M6 6.4 L7.6 1.2 L9.2 6.4 M6.6 4.6 H8.6 M6 8 H9.4 L6 12.4 H9.4" fill="none" stroke="#b0b0b0" stroke-width="0.8"/></svg>
<svg class="abs" style="left:926.7px;top:210px" width="8" height="6" viewBox="0 0 8 6"><path d="M2.3 2.15 L4 3.85 L5.7 2.15" fill="none" stroke="#cfcfcf" stroke-width="1.1" stroke-linecap="round" stroke-linejoin="round"/></svg>
<svg class="abs" style="left:911.5px;top:228px" width="14" height="13" viewBox="0 0 14 13"><path d="M3.4 1 H1 V12 H3.4 M10.6 1 H13 V12 H10.6" fill="none" stroke="#a8a8a8" stroke-width="1"/><path d="M7 1.2 V4 M7 9 V11.8 M5.8 2.4 L7 1.2 L8.2 2.4 M5.8 10.6 L7 11.8 L8.2 10.6 M4.6 6.5 H9.4" fill="none" stroke="#b4b4b4" stroke-width="0.8"/></svg>
<svg class="abs" style="left:926.7px;top:232px" width="8" height="6" viewBox="0 0 8 6"><path d="M2.3 2.15 L4 3.85 L5.7 2.15" fill="none" stroke="#cfcfcf" stroke-width="1.1" stroke-linecap="round" stroke-linejoin="round"/></svg>
<svg class="abs" style="left:911.5px;top:250.5px" width="14" height="13" viewBox="0 0 14 13"><path d="M1 1.2 L5.6 3.2 L1 5.4Z" fill="#b4b4b4"/><rect x="5.6" y="3.6" width="7" height="8.4" rx="1" fill="#e9e9e9" stroke="#aaa" stroke-width="1"/><path d="M7.2 6 H11 M7.2 8 H11 M7.2 10 H11" stroke="#bbb" stroke-width="0.7"/></svg>
<svg class="abs" style="left:926.7px;top:254.60000000000002px" width="8" height="6" viewBox="0 0 8 6"><path d="M2.3 2.15 L4 3.85 L5.7 2.15" fill="none" stroke="#cfcfcf" stroke-width="1.1" stroke-linecap="round" stroke-linejoin="round"/></svg>
<svg class="abs" style="left:725px;top:240.5px" width="12" height="11" viewBox="0 0 12 11"><path d="M0 0.8 H11.4" stroke="#b2b2b2" stroke-width="1"/><path d="M0 3.8 H7.4" stroke="#b2b2b2" stroke-width="1"/><path d="M0 6.8 H11.4" stroke="#b2b2b2" stroke-width="1"/><path d="M0 9.8 H7.4" stroke="#b2b2b2" stroke-width="1"/></svg>
<svg class="abs" style="left:749.2px;top:240.5px" width="12" height="11" viewBox="0 0 12 11"><path d="M0 0.8 H11.4" stroke="#b2b2b2" stroke-width="1"/><path d="M2 3.8 H9.4" stroke="#b2b2b2" stroke-width="1"/><path d="M0 6.8 H11.4" stroke="#b2b2b2" stroke-width="1"/><path d="M2 9.8 H9.4" stroke="#b2b2b2" stroke-width="1"/></svg>
<svg class="abs" style="left:773.7px;top:240.5px" width="12" height="11" viewBox="0 0 12 11"><path d="M0 0.8 H11.4" stroke="#b2b2b2" stroke-width="1"/><path d="M4 3.8 H11.4" stroke="#b2b2b2" stroke-width="1"/><path d="M0 6.8 H11.4" stroke="#b2b2b2" stroke-width="1"/><path d="M4 9.8 H11.4" stroke="#b2b2b2" stroke-width="1"/></svg>
<svg class="abs" style="left:798.4px;top:240.5px" width="12" height="11" viewBox="0 0 12 11"><path d="M0 0.8 H11.4" stroke="#b2b2b2" stroke-width="1"/><path d="M0 3.8 H11.4" stroke="#b2b2b2" stroke-width="1"/><path d="M0 6.8 H11.4" stroke="#b2b2b2" stroke-width="1"/><path d="M0 9.8 H11.4" stroke="#b2b2b2" stroke-width="1"/></svg>
<svg class="abs" style="left:812.5px;top:243px" width="8" height="6" viewBox="0 0 8 6"><path d="M2.4 2.2 L4 3.8 L5.6 2.2" fill="none" stroke="#d2d2d2" stroke-width="1.1" stroke-linecap="round" stroke-linejoin="round"/></svg>
<div class="t" style='left:832px;top:242.10px;font-size:8px;color:#b4b4b4;'>›¶</div>
<div class="t" style='left:857px;top:242.10px;font-size:8px;color:#b4b4b4;'>¶‹</div>
<svg class="abs" style="left:879.5px;top:241px" width="11" height="10" viewBox="0 0 11 10"><path d="M0.4 1 H4.6 M0.4 3.6 H4.6 M0.4 6.2 H4.6 M0.4 8.8 H4.6 M6.4 1 H10.6 M6.4 3.6 H10.6 M6.4 6.2 H10.6 M6.4 8.8 H10.6" stroke="#cdcdcd" stroke-width="1"/></svg>
<svg class="abs" style="left:892.7px;top:243px" width="8" height="6" viewBox="0 0 8 6"><path d="M2.4 2.2 L4 3.8 L5.6 2.2" fill="none" stroke="#d2d2d2" stroke-width="1.1" stroke-linecap="round" stroke-linejoin="round"/></svg>
<div class="t" style='left:806.7px;top:273.96px;font-size:7.7px;color:#444;letter-spacing:-0.056px;'>Абзац</div>
<svg class="abs" style="left:930.5px;top:274px" width="8" height="8" viewBox="0 0 8 8"><path d="M1 6.4 V1 H6.4" fill="none" stroke="#d0d0d0" stroke-width="0.9"/><path d="M3.4 3.4 L7 7 M7 4.2 V7 H4.2" fill="none" stroke="#d0d0d0" stroke-width="0.9"/></svg>
<svg class="abs" style="left:958px;top:208px" width="24" height="25" viewBox="0 0 24 25"><rect x="1.6" y="1.2" width="14" height="14" fill="#5b9be8" stroke="#3b78c6" stroke-width="0.8"/><circle cx="14.8" cy="15" r="7.6" fill="#fdfdfd" stroke="#444" stroke-width="1.2"/></svg>
<div class="t" style='left:953.6px;top:239.00px;font-size:9.1px;color:#3b3b3b;letter-spacing:0.023px;'>Фигуры</div>
<svg class="abs" style="left:965.4px;top:251.6px" width="8" height="6" viewBox="0 0 8 6"><path d="M2 2.0 L4 4.0 L6 2.0" fill="none" stroke="#444" stroke-width="1.2" stroke-linecap="round" stroke-linejoin="round"/></svg>
<svg class="abs" style="left:1004px;top:208px" width="25" height="24" viewBox="0 0 25 24"><rect x="5.6" y="6" width="13.6" height="13.4" fill="#f6cf7a" stroke="#d9a53a" stroke-width="0.9"/><rect x="1.6" y="1.4" width="9" height="9" rx="1" fill="#fdfdfd" stroke="#555" stroke-width="1.2"/><rect x="14.6" y="14.2" width="9" height="9" rx="1" fill="#fdfdfd" stroke="#555" stroke-width="1.2"/></svg>
<div class="t" style='left:989.8px;top:239.00px;font-size:9.1px;color:#3b3b3b;letter-spacing:0.007px;'>Упорядочить</div>
<svg class="abs" style="left:1012px;top:251.6px" width="8" height="6" viewBox="0 0 8 6"><path d="M2 2.0 L4 4.0 L6 2.0" fill="none" stroke="#444" stroke-width="1.2" stroke-linecap="round" stroke-linejoin="round"/></svg>
<svg class="abs" style="left:1055px;top:208px" width="24" height="25" viewBox="0 0 24 25"><rect x="1" y="1" width="21" height="21.6" rx="2" fill="#f3f3f3" stroke="#c4c4c4" stroke-width="1.2"/><path d="M20.6 10 L12 20.6 L8.6 22.6 L9.8 18.6 L19 8.6Z" fill="#e4e4e4" stroke="#bdbdbd" stroke-width="1"/></svg>
<div class="t" style='left:1046px;top:239.09px;font-size:9.1px;color:#cdcdcd;letter-spacing:-0.081px;'>Экспресс-</div>
<div class="t" style='left:1051.4px;top:251.50px;font-size:9.1px;color:#cdcdcd;letter-spacing:-0.118px;'>стили</div>
<svg class="abs" style="left:1076px;top:253.2px" width="8" height="6" viewBox="0 0 8 6"><path d="M2.3 2.15 L4 3.85 L5.7 2.15" fill="none" stroke="#d4d4d4" stroke-width="1.1" stroke-linecap="round" stroke-linejoin="round"/></svg>
<svg class="abs" style="left:1095px;top:206px" width="13" height="13" viewBox="0 0 13 13"><path d="M6 1.4 L10.6 6 L6.6 9.2 L2.4 5.6Z" fill="none" stroke="#a8a8a8" stroke-width="1"/><path d="M11.4 7.2 C12.4 8.6 12.2 9.6 11.4 9.6 C10.6 9.6 10.4 8.6 11.4 7.2Z" fill="#b4b4b4"/><rect x="0.6" y="10.8" width="11.6" height="1.8" fill="#cfcfcf"/></svg>
<svg class="abs" style="left:1114.8px;top:209.8px" width="8" height="6" viewBox="0 0 8 6"><path d="M2.4 2.2 L4 3.8 L5.6 2.2" fill="none" stroke="#d6d6d6" stroke-width="1.1" stroke-linecap="round" stroke-linejoin="round"/></svg>
<svg class="abs" style="left:1095px;top:228.5px" width="13" height="13" viewBox="0 0 13 13"><rect x="1" y="1.6" width="9" height="7" fill="none" stroke="#bdbdbd" stroke-width="1"/><path d="M11.6 1 L6.4 7.2 L5.6 8.6 L7 8Z" fill="#a8a8a8"/><rect x="0.6" y="10.8" width="11.6" height="1.8" fill="#cfcfcf"/></svg>
<svg class="abs" style="left:1114.8px;top:232.4px" width="8" height="6" viewBox="0 0 8 6"><path d="M2.4 2.2 L4 3.8 L5.6 2.2" fill="none" stroke="#d6d6d6" stroke-width="1.1" stroke-linecap="round" stroke-linejoin="round"/></svg>
<svg class="abs" style="left:1094px;top:250.5px" width="14" height="12" viewBox="0 0 14 12"><path d="M4.4 2 H12 L9.4 8.6 H1.6Z" fill="#dcdcdc" stroke="#9f9f9f" stroke-width="1.1"/><path d="M1.6 8.6 V10.6 H9.4 L12 4" fill="none" stroke="#9f9f9f" stroke-width="1"/></svg>
<svg class="abs" style="left:1109px;top:254.60000000000002px" width="8" height="6" viewBox="0 0 8 6"><path d="M2.4 2.2 L4 3.8 L5.6 2.2" fill="none" stroke="#d6d6d6" stroke-width="1.1" stroke-linecap="round" stroke-linejoin="round"/></svg>
<div class="t" style='left:1007.6px;top:273.76px;font-size:7.7px;color:#444;letter-spacing:-0.102px;'>Рисование</div>
<svg class="abs" style="left:1117.4px;top:274px" width="8" height="8" viewBox="0 0 8 8"><path d="M1 6.4 V1 H6.4" fill="none" stroke="#d0d0d0" stroke-width="0.9"/><path d="M3.4 3.4 L7 7 M7 4.2 V7 H4.2" fill="none" stroke="#d0d0d0" stroke-width="0.9"/></svg>
<svg class="abs" style="left:1144px;top:206px" width="13" height="13" viewBox="0 0 13 13"><circle cx="7.8" cy="5" r="3.9" fill="none" stroke="#444" stroke-width="1.1"/><path d="M5 7.8 L1 12" stroke="#444" stroke-width="1.2"/></svg>
<div class="t" style='left:1161px;top:208.79px;font-size:9.1px;color:#3b3b3b;letter-spacing:-0.111px;'>Найти</div>
<svg class="abs" style="left:1143.5px;top:228.5px" width="14" height="14" viewBox="0 0 14 14"><path d="M3.6 5.6 C1.4 6.4 1.4 9.6 4.4 10 M3.2 11.6 L4.8 10 L3.2 8.6" fill="none" stroke="#3b7fd0" stroke-width="1.1"/><path d="M6 0.6 V6.4 M6 4 C6 2.6 9 2.6 9 4.4 C9 6.2 6 6.2 6 4.6" fill="none" stroke="#c43e1c" stroke-width="1"/><path d="M11.8 9 C10.4 7.8 8.2 8.6 8.2 10.4 C8.2 12.4 10.4 13 11.8 11.8" fill="none" stroke="#3b7fd0" stroke-width="1.1"/></svg>
<div class="t" style='left:1161px;top:231.09px;font-size:9.1px;color:#3b3b3b;letter-spacing:-0.134px;'>Заменить</div>
<svg class="abs" style="left:1211.2px;top:232.4px" width="8" height="6" viewBox="0 0 8 6"><path d="M2.1 2.05 L4 3.95 L5.9 2.05" fill="none" stroke="#444" stroke-width="1.2" stroke-linecap="round" stroke-linejoin="round"/></svg>
<svg class="abs" style="left:1145px;top:250.5px" width="12" height="14" viewBox="0 0 12 14"><path d="M2 1 L10 8 H5.8 L3.4 11.8Z" fill="none" stroke="#444" stroke-width="1.1" stroke-linejoin="round"/></svg>
<div class="t" style='left:1161px;top:252.89px;font-size:9.1px;color:#3b3b3b;letter-spacing:-0.269px;'>Выделить</div>
<svg class="abs" style="left:1202.2px;top:254.60000000000002px" width="8" height="6" viewBox="0 0 8 6"><path d="M2.1 2.05 L4 3.95 L5.9 2.05" fill="none" stroke="#444" stroke-width="1.2" stroke-linecap="round" stroke-linejoin="round"/></svg>
<div class="t" style='left:1151px;top:274.46px;font-size:7.7px;color:#444;letter-spacing:-0.026px;'>Редактирование</div>
<svg class="abs" style="left:1249px;top:208.5px" width="24" height="24" viewBox="0 0 24 24"><rect x="1" y="1" width="21.6" height="21.6" fill="#fcebe6" stroke="#e9a391" stroke-width="1.2"/><g fill="#fff" stroke="#e38f7b" stroke-width="1.1"><rect x="4" y="4" width="6.4" height="6.4"/><rect x="13" y="4" width="6.4" height="6.4"/><rect x="4" y="13" width="6.4" height="6.4"/><rect x="13" y="13" width="6.4" height="6.4"/></g></svg>
<div class="t" style='left:1236.2px;top:239.50px;font-size:9.1px;color:#3b3b3b;letter-spacing:-0.141px;'>Надстройки</div>
<div class="t" style='left:1238.8px;top:274.46px;font-size:7.7px;color:#444;letter-spacing:-0.079px;'>Надстройки</div>
<svg class="abs" style="left:1315.3px;top:271.8px" width="8" height="6" viewBox="0 0 8 6"><path d="M0.7999999999999998 1.4 L4 4.6 L7.2 1.4" fill="none" stroke="#444" stroke-width="1.1" stroke-linecap="round" stroke-linejoin="round"/></svg>
<svg class="abs" style="left:205.5px;top:300px" width="7" height="7" viewBox="0 0 7 7"><path d="M6 0.8 V6 H0.8Z" fill="#555"/></svg>
<div class="t" style='left:217.8px;top:298.73px;font-size:9.4px;color:#444;letter-spacing:-0.207px;'>Раздел по умолчанию</div>
<svg class="abs" style="left:205.5px;top:483.4px" width="7" height="7" viewBox="0 0 7 7"><path d="M6 0.8 V6 H0.8Z" fill="#555"/></svg>
<div class="t" style='left:217.8px;top:482.13px;font-size:9.4px;color:#444;letter-spacing:-0.300px;'>Раздел без заголовка</div>
<div class="t" style='left:206px;top:315.15px;font-size:11px;color:#555;'>1</div>
<div class="t" style='left:206px;top:397.15px;font-size:11px;color:#555;'>2</div>
<div class="t" style='left:206px;top:498.65px;font-size:11px;color:#c0504d;'>3</div>
<div class="t" style='left:206px;top:580.25px;font-size:11px;color:#555;'>4</div>
<div class="t" style='left:206px;top:661.65px;font-size:11px;color:#555;'>5</div>
<div class="abs" style="left:223.4px;top:317.1px;width:117.6px;height:66.5px;background:#dde7f6;border:1px solid #c9d0dc;border-radius:2px;box-shadow:0 1px 2px rgba(0,0,0,0.12);overflow:hidden"><div class="abs" style="left:13px;top:9.5px;width:86px;height:1.7px;background:#3d3f45;opacity:0.72"></div><div class="abs" style="left:37px;top:13.05px;width:37px;height:1.7px;background:#3d3f45;opacity:0.72"></div><div class="abs" style="left:15px;top:16.6px;width:82px;height:1.7px;background:#3d3f45;opacity:0.72"></div><div class="abs" style="left:17px;top:20.15px;width:78px;height:1.7px;background:#3d3f45;opacity:0.72"></div><div class="abs" style="left:19px;top:23.7px;width:74px;height:1.7px;background:#3d3f45;opacity:0.72"></div><div class="abs" style="left:42px;top:27.25px;width:28px;height:1.7px;background:#3d3f45;opacity:0.72"></div><div class="abs" style="left:29px;top:45.6px;width:60px;height:1.2px;background:#6f7680;opacity:0.55"></div></div>
<div class="abs" style="left:223.4px;top:398.5px;width:117.6px;height:66.5px;background:#fbfcfd;border:1px solid #c9d0dc;border-radius:2px;box-shadow:0 1px 2px rgba(0,0,0,0.12);overflow:hidden"><div class="abs" style="left:6px;top:15.499999999999998px;width:26.1px;height:0.9px;background:#8a8d92;opacity:0.5"></div><div class="abs" style="left:6px;top:17.599999999999998px;width:20.6px;height:0.9px;background:#8a8d92;opacity:0.5"></div><div class="abs" style="left:6px;top:23.900000000000002px;width:29.4px;height:0.9px;background:#8a8d92;opacity:0.5"></div><div class="abs" style="left:9px;top:26.000000000000004px;width:27.2px;height:0.9px;background:#8a8d92;opacity:0.5"></div><div class="abs" style="left:6px;top:32.300000000000004px;width:27.0px;height:0.9px;background:#8a8d92;opacity:0.5"></div><div class="abs" style="left:6px;top:34.400000000000006px;width:21.5px;height:0.9px;background:#8a8d92;opacity:0.5"></div><div class="abs" style="left:9px;top:36.50000000000001px;width:31.2px;height:0.9px;background:#8a8d92;opacity:0.5"></div><div class="abs" style="left:9px;top:38.60000000000001px;width:23.0px;height:0.9px;background:#8a8d92;opacity:0.5"></div><div class="abs" style="left:9px;top:40.70000000000001px;width:30.5px;height:0.9px;background:#8a8d92;opacity:0.5"></div><div class="abs" style="left:6px;top:42.80000000000001px;width:24.5px;height:0.9px;background:#8a8d92;opacity:0.5"></div><div class="abs" style="left:6px;top:44.90000000000001px;width:21.3px;height:0.9px;background:#8a8d92;opacity:0.5"></div><div class="abs" style="left:6px;top:47.000000000000014px;width:19.8px;height:0.9px;background:#8a8d92;opacity:0.5"></div><div class="abs" style="left:6px;top:49.100000000000016px;width:22.8px;height:0.9px;background:#8a8d92;opacity:0.5"></div><div class="abs" style="left:9px;top:51.20000000000002px;width:23.6px;height:0.9px;background:#8a8d92;opacity:0.5"></div><div class="abs" style="left:44px;top:5.0px;width:32.7px;height:0.9px;background:#8a8d92;opacity:0.5"></div><div class="abs" style="left:47px;top:7.1px;width:23.5px;height:0.9px;background:#8a8d92;opacity:0.5"></div><div class="abs" style="left:44px;top:9.2px;width:23.6px;height:0.9px;background:#8a8d92;opacity:0.5"></div><div class="abs" style="left:44px;top:11.299999999999999px;width:26.6px;height:0.9px;background:#8a8d92;opacity:0.5"></div><div class="abs" style="left:47px;top:13.399999999999999px;width:32.6px;height:0.9px;background:#8a8d92;opacity:0.5"></div><div class="abs" style="left:44px;top:15.499999999999998px;width:33.5px;height:0.9px;background:#8a8d92;opacity:0.5"></div><div class="abs" style="left:47px;top:17.599999999999998px;width:33.5px;height:0.9px;background:#8a8d92;opacity:0.5"></div><div class="abs" style="left:44px;top:19.7px;width:33.2px;height:0.9px;background:#8a8d92;opacity:0.5"></div><div class="abs" style="left:44px;top:21.8px;width:24.4px;height:0.9px;background:#8a8d92;opacity:0.5"></div><div class="abs" style="left:44px;top:23.900000000000002px;width:22.3px;height:0.9px;background:#8a8d92;opacity:0.5"></div><div class="abs" style="left:44px;top:28.100000000000005px;width:20.5px;height:0.9px;background:#8a8d92;opacity:0.5"></div><div class="abs" style="left:44px;top:30.200000000000006px;width:31.1px;height:0.9px;background:#8a8d92;opacity:0.5"></div><div class="abs" style="left:47px;top:32.300000000000004px;width:21.7px;height:0.9px;background:#8a8d92;opacity:0.5"></div><div class="abs" style="left:44px;top:34.400000000000006px;width:23.2px;height:0.9px;background:#8a8d92;opacity:0.5"></div><div class="abs" style="left:44px;top:36.50000000000001px;width:22.7px;height:0.9px;background:#8a8d92;opacity:0.5"></div><div class="abs" style="left:44px;top:38.60000000000001px;width:21.0px;height:0.9px;background:#8a8d92;opacity:0.5"></div><div class="abs" style="left:44px;top:40.70000000000001px;width:34.0px;height:0.9px;background:#8a8d92;opacity:0.5"></div><div class="abs" style="left:44px;top:42.80000000000001px;width:30.9px;height:0.9px;background:#8a8d92;opacity:0.5"></div><div class="abs" style="left:44px;top:47.000000000000014px;width:23.7px;height:0.9px;background:#8a8d92;opacity:0.5"></div><div class="abs" style="left:44px;top:49.100000000000016px;width:26.1px;height:0.9px;background:#8a8d92;opacity:0.5"></div><div class="abs" style="left:44px;top:55.40000000000002px;width:20.8px;height:0.9px;background:#8a8d92;opacity:0.5"></div><div class="abs" style="left:44px;top:57.50000000000002px;width:23.2px;height:0.9px;background:#8a8d92;opacity:0.5"></div><div class="abs" style="left:87px;top:5.0px;width:18.6px;height:0.9px;background:#8a8d92;opacity:0.5"></div><div class="abs" style="left:84px;top:7.1px;width:29.9px;height:0.9px;background:#8a8d92;opacity:0.5"></div><div class="abs" style="left:87px;top:11.299999999999999px;width:27.5px;height:0.9px;background:#8a8d92;opacity:0.5"></div><div class="abs" style="left:84px;top:13.399999999999999px;width:19.1px;height:0.9px;background:#8a8d92;opacity:0.5"></div><div class="abs" style="left:87px;top:21.8px;width:25.9px;height:0.9px;background:#8a8d92;opacity:0.5"></div><div class="abs" style="left:84px;top:23.900000000000002px;width:27.8px;height:0.9px;background:#8a8d92;opacity:0.5"></div><div class="abs" style="left:84px;top:26.000000000000004px;width:26.2px;height:0.9px;background:#8a8d92;opacity:0.5"></div><div class="abs" style="left:87px;top:32.300000000000004px;width:29.7px;height:0.9px;background:#8a8d92;opacity:0.5"></div><div class="abs" style="left:87px;top:34.400000000000006px;width:18.5px;height:0.9px;background:#8a8d92;opacity:0.5"></div><div class="abs" style="left:84px;top:36.50000000000001px;width:29.6px;height:0.9px;background:#8a8d92;opacity:0.5"></div><div class="abs" style="left:14px;top:5px;width:3px;height:4px;background:#444;opacity:0.7"></div><div class="abs" style="left:8px;top:10.5px;width:18px;height:0.9px;background:#777;opacity:0.6"></div><div class="abs" style="left:10px;top:12.8px;width:14px;height:0.9px;background:#777;opacity:0.6"></div><div class="abs" style="left:92px;top:42px;width:12px;height:1px;background:#666;opacity:0.5"></div></div>
<div class="abs" style="left:221px;top:498.4px;width:122px;height:70.6px;border:2px solid #8c1d2d;border-radius:4.5px;background:#e9ecf1"></div>
<div class="abs" style="left:223.6px;top:501px;width:116.8px;height:65.4px;background:#dde7f6;border-radius:2px;overflow:hidden"><div class="abs" style="left:9px;top:6.6px;width:98px;height:1.6px;background:#3a3d45;opacity:0.7"></div><div class="abs" style="left:36px;top:9.9px;width:44px;height:1.6px;background:#3a3d45;opacity:0.7"></div><div class="abs" style="left:6.5px;top:14.5px;width:105px;height:49px;background:#fdfdfd"></div><div class="abs" style="left:6.5px;top:20.25px;width:105px;height:0.7px;background:#444;opacity:0.55"></div><div class="abs" style="left:6.5px;top:22.73px;width:105px;height:0.7px;background:#444;opacity:0.55"></div><div class="abs" style="left:6.5px;top:25.24px;width:105px;height:0.7px;background:#444;opacity:0.55"></div><div class="abs" style="left:6.5px;top:30.2px;width:105px;height:0.7px;background:#444;opacity:0.55"></div><div class="abs" style="left:6.5px;top:35.12px;width:105px;height:0.7px;background:#444;opacity:0.55"></div><div class="abs" style="left:6.5px;top:42.52px;width:105px;height:0.7px;background:#444;opacity:0.55"></div><div class="abs" style="left:6.5px;top:49.93px;width:105px;height:0.7px;background:#444;opacity:0.55"></div><div class="abs" style="left:6.5px;top:57.39px;width:105px;height:0.7px;background:#444;opacity:0.55"></div><div class="abs" style="left:6.5px;top:62.43px;width:105px;height:0.7px;background:#444;opacity:0.55"></div><div class="abs" style="left:22.57px;top:27.73px;width:24.79px;height:0.6px;background:#555;opacity:0.6"></div><div class="abs" style="left:66.41px;top:27.73px;width:45.09px;height:0.6px;background:#555;opacity:0.6"></div><div class="abs" style="left:22.57px;top:32.66px;width:24.79px;height:0.6px;background:#555;opacity:0.6"></div><div class="abs" style="left:66.41px;top:32.66px;width:45.09px;height:0.6px;background:#555;opacity:0.6"></div><div class="abs" style="left:22.57px;top:40.03px;width:24.79px;height:0.6px;background:#555;opacity:0.6"></div><div class="abs" style="left:66.41px;top:40.03px;width:45.09px;height:0.6px;background:#555;opacity:0.6"></div><div class="abs" style="left:22.57px;top:47.5px;width:24.79px;height:0.6px;background:#555;opacity:0.6"></div><div class="abs" style="left:66.41px;top:47.5px;width:45.09px;height:0.6px;background:#555;opacity:0.6"></div><div class="abs" style="left:22.57px;top:54.98px;width:24.79px;height:0.6px;background:#555;opacity:0.6"></div><div class="abs" style="left:66.41px;top:54.98px;width:45.09px;height:0.6px;background:#555;opacity:0.6"></div><div class="abs" style="left:22.57px;top:59.91px;width:24.79px;height:0.6px;background:#555;opacity:0.6"></div><div class="abs" style="left:66.41px;top:59.91px;width:45.09px;height:0.6px;background:#555;opacity:0.6"></div><div class="abs" style="left:6.5px;top:20.25px;width:0.7px;height:42.18px;background:#555;opacity:0.5"></div><div class="abs" style="left:22.57px;top:20.25px;width:0.7px;height:42.18px;background:#555;opacity:0.5"></div><div class="abs" style="left:47.36px;top:20.25px;width:0.7px;height:42.18px;background:#555;opacity:0.5"></div><div class="abs" style="left:66.41px;top:20.25px;width:0.7px;height:42.18px;background:#555;opacity:0.5"></div><div class="abs" style="left:92.18px;top:14.5px;width:0.7px;height:47.93px;background:#555;opacity:0.5"></div><div class="abs" style="left:111.5px;top:14.5px;width:0.7px;height:47.93px;background:#555;opacity:0.5"></div><div class="abs" style="left:9.71px;top:26.02px;width:9.64px;height:1.0px;background:#555;opacity:0.45"></div><div class="abs" style="left:9.71px;top:28.6px;width:9.64px;height:1.0px;background:#555;opacity:0.45"></div><div class="abs" style="left:9.71px;top:31.01px;width:9.64px;height:1.0px;background:#555;opacity:0.45"></div><div class="abs" style="left:9.71px;top:33.58px;width:9.64px;height:1.0px;background:#555;opacity:0.45"></div><div class="abs" style="left:9.71px;top:37.28px;width:9.64px;height:1.0px;background:#555;opacity:0.45"></div><div class="abs" style="left:9.71px;top:44.67px;width:9.64px;height:1.0px;background:#555;opacity:0.45"></div><div class="abs" style="left:9.71px;top:52.23px;width:9.64px;height:1.0px;background:#555;opacity:0.45"></div><div class="abs" style="left:9.71px;top:58.33px;width:9.64px;height:1.0px;background:#555;opacity:0.45"></div><div class="abs" style="left:9.71px;top:60.75px;width:9.64px;height:1.0px;background:#555;opacity:0.45"></div><div class="abs" style="left:26.93px;top:26.02px;width:16.07px;height:1.0px;background:#555;opacity:0.45"></div><div class="abs" style="left:26.93px;top:28.6px;width:16.07px;height:1.0px;background:#555;opacity:0.45"></div><div class="abs" style="left:26.93px;top:31.01px;width:16.07px;height:1.0px;background:#555;opacity:0.45"></div><div class="abs" style="left:26.93px;top:33.58px;width:16.07px;height:1.0px;background:#555;opacity:0.45"></div><div class="abs" style="left:26.93px;top:37.28px;width:16.07px;height:1.0px;background:#555;opacity:0.45"></div><div class="abs" style="left:26.93px;top:40.81px;width:16.07px;height:1.0px;background:#555;opacity:0.45"></div><div class="abs" style="left:26.93px;top:44.67px;width:16.07px;height:1.0px;background:#555;opacity:0.45"></div><div class="abs" style="left:26.93px;top:48.37px;width:16.07px;height:1.0px;background:#555;opacity:0.45"></div><div class="abs" style="left:26.93px;top:52.23px;width:16.07px;height:1.0px;background:#555;opacity:0.45"></div><div class="abs" style="left:26.93px;top:55.76px;width:16.07px;height:1.0px;background:#555;opacity:0.45"></div><div class="abs" style="left:26.93px;top:58.33px;width:16.07px;height:1.0px;background:#555;opacity:0.45"></div><div class="abs" style="left:26.93px;top:60.75px;width:16.07px;height:1.0px;background:#555;opacity:0.45"></div><div class="abs" style="left:52.88px;top:28.6px;width:8.04px;height:1.0px;background:#555;opacity:0.45"></div><div class="abs" style="left:52.88px;top:33.58px;width:8.04px;height:1.0px;background:#555;opacity:0.45"></div><div class="abs" style="left:52.88px;top:58.33px;width:8.04px;height:1.0px;background:#555;opacity:0.45"></div><div class="abs" style="left:52.88px;top:60.75px;width:8.04px;height:1.0px;background:#555;opacity:0.45"></div><div class="abs" style="left:71.25px;top:26.02px;width:16.07px;height:1.0px;background:#555;opacity:0.45"></div><div class="abs" style="left:71.25px;top:28.6px;width:16.07px;height:1.0px;background:#555;opacity:0.45"></div><div class="abs" style="left:71.25px;top:31.01px;width:16.07px;height:1.0px;background:#555;opacity:0.45"></div><div class="abs" style="left:71.25px;top:33.58px;width:16.07px;height:1.0px;background:#555;opacity:0.45"></div><div class="abs" style="left:71.25px;top:37.28px;width:16.07px;height:1.0px;background:#555;opacity:0.45"></div><div class="abs" style="left:71.25px;top:40.81px;width:16.07px;height:1.0px;background:#555;opacity:0.45"></div><div class="abs" style="left:71.25px;top:44.67px;width:16.07px;height:1.0px;background:#555;opacity:0.45"></div><div class="abs" style="left:71.25px;top:48.37px;width:16.07px;height:1.0px;background:#555;opacity:0.45"></div><div class="abs" style="left:71.25px;top:52.23px;width:16.07px;height:1.0px;background:#555;opacity:0.45"></div><div class="abs" style="left:71.25px;top:55.76px;width:16.07px;height:1.0px;background:#555;opacity:0.45"></div><div class="abs" style="left:71.25px;top:58.33px;width:16.07px;height:1.0px;background:#555;opacity:0.45"></div><div class="abs" style="left:71.25px;top:60.75px;width:16.07px;height:1.0px;background:#555;opacity:0.45"></div><div class="abs" style="left:94.35px;top:31.01px;width:14.79px;height:1.0px;background:#555;opacity:0.5"></div><div class="abs" style="left:94.35px;top:33.58px;width:14.79px;height:1.0px;background:#555;opacity:0.5"></div><div class="abs" style="left:94.35px;top:40.81px;width:14.79px;height:1.0px;background:#555;opacity:0.5"></div><div class="abs" style="left:94.35px;top:44.67px;width:14.79px;height:1.0px;background:#555;opacity:0.5"></div><div class="abs" style="left:94.35px;top:48.37px;width:14.79px;height:1.0px;background:#555;opacity:0.5"></div><div class="abs" style="left:94.35px;top:50.94px;width:14.79px;height:1.0px;background:#555;opacity:0.5"></div><div class="abs" style="left:94.35px;top:53.35px;width:14.79px;height:1.0px;background:#555;opacity:0.5"></div><div class="abs" style="left:9.96px;top:16.22px;width:78.77px;height:0.9px;background:#555;opacity:0.45"></div><div class="abs" style="left:26.03px;top:18.63px;width:46.62px;height:0.9px;background:#555;opacity:0.45"></div></div>
<div class="abs" style="left:223.4px;top:581.6px;width:117.6px;height:67px;background:#dde7f6;border:1px solid #c9d0dc;border-radius:2px;box-shadow:0 1px 2px rgba(0,0,0,0.12);overflow:hidden"><div class="abs" style="left:9px;top:4.4px;width:98px;height:1.3px;background:#3a4a7a;opacity:0.5"></div><div class="abs" style="left:7.5px;top:7.5px;width:99px;height:57px;background:#fdfdfd"></div><div class="abs" style="left:11.5px;top:7.5px;width:0.6px;height:57px;background:#c9a0a4;opacity:0.45"></div><div class="abs" style="left:26.5px;top:7.5px;width:0.6px;height:57px;background:#c9a0a4;opacity:0.45"></div><div class="abs" style="left:35.5px;top:7.5px;width:0.6px;height:57px;background:#c9a0a4;opacity:0.45"></div><div class="abs" style="left:42.5px;top:7.5px;width:0.6px;height:57px;background:#c9a0a4;opacity:0.45"></div><div class="abs" style="left:51px;top:7.5px;width:0.6px;height:57px;background:#c9a0a4;opacity:0.45"></div><div class="abs" style="left:58px;top:7.5px;width:0.6px;height:57px;background:#c9a0a4;opacity:0.45"></div><div class="abs" style="left:65px;top:7.5px;width:0.6px;height:57px;background:#c9a0a4;opacity:0.45"></div><div class="abs" style="left:73.5px;top:7.5px;width:0.6px;height:57px;background:#c9a0a4;opacity:0.45"></div><div class="abs" style="left:82px;top:7.5px;width:0.6px;height:57px;background:#c9a0a4;opacity:0.45"></div><div class="abs" style="left:90px;top:7.5px;width:0.6px;height:57px;background:#c9a0a4;opacity:0.45"></div><div class="abs" style="left:98px;top:7.5px;width:0.6px;height:57px;background:#c9a0a4;opacity:0.45"></div><div class="abs" style="left:7.5px;top:15.5px;width:99px;height:0.6px;background:#c9a0a4;opacity:0.4"></div><div class="abs" style="left:7.5px;top:25px;width:99px;height:0.6px;background:#c9a0a4;opacity:0.4"></div><div class="abs" style="left:7.5px;top:41px;width:99px;height:0.6px;background:#c9a0a4;opacity:0.4"></div><div class="abs" style="left:7.5px;top:49px;width:99px;height:0.6px;background:#c9a0a4;opacity:0.4"></div><div class="abs" style="left:13.0px;top:9.4px;width:11.5px;height:4px;background:#a86870;opacity:0.2"></div><div class="abs" style="left:27.5px;top:9.4px;width:5.5px;height:3px;background:#a86870;opacity:0.2"></div><div class="abs" style="left:36.5px;top:9.4px;width:12.5px;height:2px;background:#a86870;opacity:0.2"></div><div class="abs" style="left:51.5px;top:8.9px;width:4.5px;height:6px;background:#a86870;opacity:0.2"></div><div class="abs" style="left:60.5px;top:8.9px;width:34.5px;height:1.5px;background:#a86870;opacity:0.2"></div><div class="abs" style="left:59.5px;top:13.4px;width:3.5px;height:5px;background:#a86870;opacity:0.2"></div><div class="abs" style="left:66.5px;top:13.4px;width:4.5px;height:6px;background:#a86870;opacity:0.2"></div><div class="abs" style="left:74.5px;top:13.4px;width:5.5px;height:6px;background:#a86870;opacity:0.2"></div><div class="abs" style="left:83.5px;top:13.4px;width:4.5px;height:5px;background:#a86870;opacity:0.2"></div><div class="abs" style="left:91.5px;top:13.4px;width:4.5px;height:6px;background:#a86870;opacity:0.2"></div><div class="abs" style="left:99.5px;top:12.4px;width:3.5px;height:3px;background:#a86870;opacity:0.2"></div><div class="abs" style="left:13.0px;top:26.9px;width:11.5px;height:13px;background:#a86870;opacity:0.2"></div><div class="abs" style="left:28.0px;top:27.4px;width:5.5px;height:2px;background:#a86870;opacity:0.2"></div><div class="abs" style="left:59.5px;top:27.4px;width:3.5px;height:1.4px;background:#a86870;opacity:0.2"></div><div class="abs" style="left:75.0px;top:27.4px;width:4.5px;height:2.4px;background:#a86870;opacity:0.2"></div><div class="abs" style="left:83.5px;top:27.4px;width:4.5px;height:1.4px;background:#a86870;opacity:0.2"></div><div class="abs" style="left:13.5px;top:42.4px;width:10.5px;height:5px;background:#a86870;opacity:0.2"></div><div class="abs" style="left:28.5px;top:42.4px;width:4.5px;height:4px;background:#a86870;opacity:0.2"></div><div class="abs" style="left:59.5px;top:43.4px;width:3.5px;height:2px;background:#a86870;opacity:0.2"></div><div class="abs" style="left:67.0px;top:43.0px;width:3.5px;height:1.4px;background:#a86870;opacity:0.2"></div><div class="abs" style="left:75.0px;top:43.4px;width:4.5px;height:2px;background:#a86870;opacity:0.2"></div><div class="abs" style="left:83.5px;top:43.4px;width:4.5px;height:1.4px;background:#a86870;opacity:0.2"></div><div class="abs" style="left:91.5px;top:43.0px;width:4.5px;height:1.4px;background:#a86870;opacity:0.2"></div><div class="abs" style="left:13.5px;top:50.4px;width:10.5px;height:8px;background:#a86870;opacity:0.2"></div><div class="abs" style="left:28.0px;top:50.4px;width:5.5px;height:1.4px;background:#a86870;opacity:0.2"></div><div class="abs" style="left:36.5px;top:50.4px;width:4.5px;height:13px;background:#a86870;opacity:0.2"></div><div class="abs" style="left:59.5px;top:51.0px;width:3.5px;height:1.4px;background:#a86870;opacity:0.2"></div><div class="abs" style="left:67.0px;top:51.0px;width:3.5px;height:1.4px;background:#a86870;opacity:0.2"></div><div class="abs" style="left:75.0px;top:51.0px;width:4.5px;height:3px;background:#a86870;opacity:0.2"></div><div class="abs" style="left:83.5px;top:51.0px;width:4.5px;height:1.4px;background:#a86870;opacity:0.2"></div><div class="abs" style="left:91.5px;top:50.4px;width:4.5px;height:1.4px;background:#a86870;opacity:0.2"></div></div>
<div class="abs" style="left:223.4px;top:663.9px;width:117.6px;height:66.6px;background:#dde7f6;border:1px solid #c9d0dc;border-radius:2px;box-shadow:0 1px 2px rgba(0,0,0,0.12);overflow:hidden"><div class="abs" style="left:6px;top:3px;width:103px;height:60px;background:#fdfdfd"></div><div class="abs" style="left:21px;top:3px;width:0.6px;height:60px;background:#c9a0a4;opacity:0.45"></div><div class="abs" style="left:32px;top:3px;width:0.6px;height:60px;background:#c9a0a4;opacity:0.45"></div><div class="abs" style="left:40px;top:3px;width:0.6px;height:60px;background:#c9a0a4;opacity:0.45"></div><div class="abs" style="left:47px;top:3px;width:0.6px;height:60px;background:#c9a0a4;opacity:0.45"></div><div class="abs" style="left:55px;top:3px;width:0.6px;height:60px;background:#c9a0a4;opacity:0.45"></div><div class="abs" style="left:63px;top:3px;width:0.6px;height:60px;background:#c9a0a4;opacity:0.45"></div><div class="abs" style="left:71px;top:3px;width:0.6px;height:60px;background:#c9a0a4;opacity:0.45"></div><div class="abs" style="left:79px;top:3px;width:0.6px;height:60px;background:#c9a0a4;opacity:0.45"></div><div class="abs" style="left:87px;top:3px;width:0.6px;height:60px;background:#c9a0a4;opacity:0.45"></div><div class="abs" style="left:96px;top:3px;width:0.6px;height:60px;background:#c9a0a4;opacity:0.45"></div><div class="abs" style="left:6px;top:14px;width:103px;height:0.6px;background:#c9a0a4;opacity:0.4"></div><div class="abs" style="left:6px;top:22px;width:103px;height:0.6px;background:#c9a0a4;opacity:0.4"></div><div class="abs" style="left:6px;top:30px;width:103px;height:0.6px;background:#c9a0a4;opacity:0.4"></div><div class="abs" style="left:6px;top:38px;width:103px;height:0.6px;background:#c9a0a4;opacity:0.4"></div><div class="abs" style="left:6px;top:47px;width:103px;height:0.6px;background:#c9a0a4;opacity:0.4"></div><div class="abs" style="left:9.5px;top:4.4px;width:9.5px;height:7px;background:#a86068;opacity:0.22"></div><div class="abs" style="left:22.5px;top:4.4px;width:7.5px;height:6px;background:#a86068;opacity:0.22"></div><div class="abs" style="left:56.5px;top:4.9px;width:4.5px;height:1.4px;background:#a86068;opacity:0.22"></div><div class="abs" style="left:64.5px;top:4.9px;width:4.5px;height:3px;background:#a86068;opacity:0.22"></div><div class="abs" style="left:72.5px;top:4.9px;width:4.5px;height:1.4px;background:#a86068;opacity:0.22"></div><div class="abs" style="left:88.5px;top:4.9px;width:5.5px;height:2px;background:#a86068;opacity:0.22"></div><div class="abs" style="left:97.5px;top:4.9px;width:6.5px;height:2px;background:#a86068;opacity:0.22"></div><div class="abs" style="left:9.5px;top:15.4px;width:9.5px;height:4px;background:#a86068;opacity:0.22"></div><div class="abs" style="left:22.5px;top:15.4px;width:7.5px;height:4px;background:#a86068;opacity:0.22"></div><div class="abs" style="left:33.5px;top:16.4px;width:4.5px;height:2px;background:#a86068;opacity:0.22"></div><div class="abs" style="left:9.5px;top:23.4px;width:9.5px;height:5px;background:#a86068;opacity:0.22"></div><div class="abs" style="left:22.5px;top:23.4px;width:7.5px;height:5px;background:#a86068;opacity:0.22"></div><div class="abs" style="left:48.5px;top:24.0px;width:4.5px;height:1.4px;background:#a86068;opacity:0.22"></div><div class="abs" style="left:56.5px;top:24.0px;width:4.5px;height:1.4px;background:#a86068;opacity:0.22"></div><div class="abs" style="left:64.5px;top:24.0px;width:4.5px;height:3px;background:#a86068;opacity:0.22"></div><div class="abs" style="left:72.5px;top:24.0px;width:4.5px;height:3px;background:#a86068;opacity:0.22"></div><div class="abs" style="left:88.5px;top:24.0px;width:16.5px;height:1.4px;background:#a86068;opacity:0.22"></div><div class="abs" style="left:9.5px;top:31.4px;width:9.5px;height:5px;background:#a86068;opacity:0.22"></div><div class="abs" style="left:22.5px;top:31.4px;width:7.5px;height:5px;background:#a86068;opacity:0.22"></div><div class="abs" style="left:48.5px;top:32.4px;width:4.5px;height:4px;background:#a86068;opacity:0.22"></div><div class="abs" style="left:56.5px;top:32.4px;width:5.5px;height:2px;background:#a86068;opacity:0.22"></div><div class="abs" style="left:9.5px;top:39.4px;width:9.5px;height:6px;background:#a86068;opacity:0.22"></div><div class="abs" style="left:22.5px;top:39.4px;width:7.5px;height:5px;background:#a86068;opacity:0.22"></div><div class="abs" style="left:33.5px;top:40.4px;width:5.5px;height:11px;background:#a86068;opacity:0.22"></div><div class="abs" style="left:64.5px;top:40.4px;width:4.5px;height:3px;background:#a86068;opacity:0.22"></div><div class="abs" style="left:72.5px;top:40.4px;width:4.5px;height:2px;background:#a86068;opacity:0.22"></div><div class="abs" style="left:88.5px;top:40.4px;width:5.5px;height:1.4px;background:#a86068;opacity:0.22"></div><div class="abs" style="left:9.5px;top:48.4px;width:9.5px;height:8px;background:#a86068;opacity:0.22"></div><div class="abs" style="left:22.5px;top:48.4px;width:7.5px;height:4px;background:#a86068;opacity:0.22"></div><div class="abs" style="left:33.5px;top:53.4px;width:5.5px;height:7px;background:#a86068;opacity:0.22"></div></div>
<svg class="abs" style="left:357.4px;top:287.6px" width="8" height="6" viewBox="0 0 8 6"><path d="M4 0.8 L7.4 5.2 H0.6Z" fill="#555"/></svg>
<div class="abs" style="left:358.2px;top:297.6px;width:6.6px;height:177px;border-radius:3.3px;background:#6c6c6c"></div>
<svg class="abs" style="left:357.4px;top:733.8px" width="8" height="6" viewBox="0 0 8 6"><path d="M4 5.2 L7.4 0.8 H0.6Z" fill="#555"/></svg>
<div class="abs" style="left:367.6px;top:286px;width:1px;height:456.6px;background:#dfe2e8;"></div>
<div class="abs" style="left:509.3px;top:288px;width:699px;height:10px;background:#fafbfc;"></div>
<svg class="abs" style="left:509.3px;top:288px" width="699" height="10" viewBox="0 0 699 10" font-family="Liberation Sans, sans-serif" font-size="7.4" fill="#555"><text x="19.5" y="8.3" text-anchor="middle">16</text><rect x="29.4" y="3.6" width="0.8" height="3" fill="#8a8a8a"/><rect x="24.3" y="4.8" width="0.7" height="1" fill="#aaa"/><rect x="34.6" y="4.8" width="0.7" height="1" fill="#aaa"/><text x="40.1" y="8.3" text-anchor="middle">15</text><rect x="50.0" y="3.6" width="0.8" height="3" fill="#8a8a8a"/><rect x="45.0" y="4.8" width="0.7" height="1" fill="#aaa"/><rect x="55.3" y="4.8" width="0.7" height="1" fill="#aaa"/><text x="60.7" y="8.3" text-anchor="middle">14</text><rect x="70.7" y="3.6" width="0.8" height="3" fill="#8a8a8a"/><rect x="65.6" y="4.8" width="0.7" height="1" fill="#aaa"/><rect x="75.9" y="4.8" width="0.7" height="1" fill="#aaa"/><text x="81.4" y="8.3" text-anchor="middle">13</text><rect x="91.3" y="3.6" width="0.8" height="3" fill="#8a8a8a"/><rect x="86.2" y="4.8" width="0.7" height="1" fill="#aaa"/><rect x="96.6" y="4.8" width="0.7" height="1" fill="#aaa"/><text x="102.0" y="8.3" text-anchor="middle">12</text><rect x="111.9" y="3.6" width="0.8" height="3" fill="#8a8a8a"/><rect x="106.9" y="4.8" width="0.7" height="1" fill="#aaa"/><rect x="117.2" y="4.8" width="0.7" height="1" fill="#aaa"/><text x="122.7" y="8.3" text-anchor="middle">11</text><rect x="132.6" y="3.6" width="0.8" height="3" fill="#8a8a8a"/><rect x="127.5" y="4.8" width="0.7" height="1" fill="#aaa"/><rect x="137.8" y="4.8" width="0.7" height="1" fill="#aaa"/><text x="143.3" y="8.3" text-anchor="middle">10</text><rect x="153.2" y="3.6" width="0.8" height="3" fill="#8a8a8a"/><rect x="148.2" y="4.8" width="0.7" height="1" fill="#aaa"/><rect x="158.5" y="4.8" width="0.7" height="1" fill="#aaa"/><text x="163.9" y="8.3" text-anchor="middle">9</text><rect x="173.9" y="3.6" width="0.8" height="3" fill="#8a8a8a"/><rect x="168.8" y="4.8" width="0.7" height="1" fill="#aaa"/><rect x="179.1" y="4.8" width="0.7" height="1" fill="#aaa"/><text x="184.6" y="8.3" text-anchor="middle">8</text><rect x="194.5" y="3.6" width="0.8" height="3" fill="#8a8a8a"/><rect x="189.4" y="4.8" width="0.7" height="1" fill="#aaa"/><rect x="199.8" y="4.8" width="0.7" height="1" fill="#aaa"/><text x="205.2" y="8.3" text-anchor="middle">7</text><rect x="215.1" y="3.6" width="0.8" height="3" fill="#8a8a8a"/><rect x="210.1" y="4.8" width="0.7" height="1" fill="#aaa"/><rect x="220.4" y="4.8" width="0.7" height="1" fill="#aaa"/><text x="225.9" y="8.3" text-anchor="middle">6</text><rect x="235.8" y="3.6" width="0.8" height="3" fill="#8a8a8a"/><rect x="230.7" y="4.8" width="0.7" height="1" fill="#aaa"/><rect x="241.0" y="4.8" width="0.7" height="1" fill="#aaa"/><text x="246.5" y="8.3" text-anchor="middle">5</text><rect x="256.4" y="3.6" width="0.8" height="3" fill="#8a8a8a"/><rect x="251.4" y="4.8" width="0.7" height="1" fill="#aaa"/><rect x="261.7" y="4.8" width="0.7" height="1" fill="#aaa"/><text x="267.1" y="8.3" text-anchor="middle">4</text><rect x="277.1" y="3.6" width="0.8" height="3" fill="#8a8a8a"/><rect x="272.0" y="4.8" width="0.7" height="1" fill="#aaa"/><rect x="282.3" y="4.8" width="0.7" height="1" fill="#aaa"/><text x="287.8" y="8.3" text-anchor="middle">3</text><rect x="297.7" y="3.6" width="0.8" height="3" fill="#8a8a8a"/><rect x="292.6" y="4.8" width="0.7" height="1" fill="#aaa"/><rect x="303.0" y="4.8" width="0.7" height="1" fill="#aaa"/><text x="308.4" y="8.3" text-anchor="middle">2</text><rect x="318.3" y="3.6" width="0.8" height="3" fill="#8a8a8a"/><rect x="313.3" y="4.8" width="0.7" height="1" fill="#aaa"/><rect x="323.6" y="4.8" width="0.7" height="1" fill="#aaa"/><text x="329.1" y="8.3" text-anchor="middle">1</text><rect x="339.0" y="3.6" width="0.8" height="3" fill="#8a8a8a"/><rect x="333.9" y="4.8" width="0.7" height="1" fill="#aaa"/><rect x="344.2" y="4.8" width="0.7" height="1" fill="#aaa"/><text x="349.7" y="8.3" text-anchor="middle">0</text><rect x="359.6" y="3.6" width="0.8" height="3" fill="#8a8a8a"/><rect x="354.6" y="4.8" width="0.7" height="1" fill="#aaa"/><rect x="364.9" y="4.8" width="0.7" height="1" fill="#aaa"/><text x="370.3" y="8.3" text-anchor="middle">1</text><rect x="380.3" y="3.6" width="0.8" height="3" fill="#8a8a8a"/><rect x="375.2" y="4.8" width="0.7" height="1" fill="#aaa"/><rect x="385.5" y="4.8" width="0.7" height="1" fill="#aaa"/><text x="391.0" y="8.3" text-anchor="middle">2</text><rect x="400.9" y="3.6" width="0.8" height="3" fill="#8a8a8a"/><rect x="395.8" y="4.8" width="0.7" height="1" fill="#aaa"/><rect x="406.2" y="4.8" width="0.7" height="1" fill="#aaa"/><text x="411.6" y="8.3" text-anchor="middle">3</text><rect x="421.5" y="3.6" width="0.8" height="3" fill="#8a8a8a"/><rect x="416.5" y="4.8" width="0.7" height="1" fill="#aaa"/><rect x="426.8" y="4.8" width="0.7" height="1" fill="#aaa"/><text x="432.3" y="8.3" text-anchor="middle">4</text><rect x="442.2" y="3.6" width="0.8" height="3" fill="#8a8a8a"/><rect x="437.1" y="4.8" width="0.7" height="1" fill="#aaa"/><rect x="447.4" y="4.8" width="0.7" height="1" fill="#aaa"/><text x="452.9" y="8.3" text-anchor="middle">5</text><rect x="462.8" y="3.6" width="0.8" height="3" fill="#8a8a8a"/><rect x="457.8" y="4.8" width="0.7" height="1" fill="#aaa"/><rect x="468.1" y="4.8" width="0.7" height="1" fill="#aaa"/><text x="473.5" y="8.3" text-anchor="middle">6</text><rect x="483.5" y="3.6" width="0.8" height="3" fill="#8a8a8a"/><rect x="478.4" y="4.8" width="0.7" height="1" fill="#aaa"/><rect x="488.7" y="4.8" width="0.7" height="1" fill="#aaa"/><text x="494.2" y="8.3" text-anchor="middle">7</text><rect x="504.1" y="3.6" width="0.8" height="3" fill="#8a8a8a"/><rect x="499.0" y="4.8" width="0.7" height="1" fill="#aaa"/><rect x="509.4" y="4.8" width="0.7" height="1" fill="#aaa"/><text x="514.8" y="8.3" text-anchor="middle">8</text><rect x="524.7" y="3.6" width="0.8" height="3" fill="#8a8a8a"/><rect x="519.7" y="4.8" width="0.7" height="1" fill="#aaa"/><rect x="530.0" y="4.8" width="0.7" height="1" fill="#aaa"/><text x="535.5" y="8.3" text-anchor="middle">9</text><rect x="545.4" y="3.6" width="0.8" height="3" fill="#8a8a8a"/><rect x="540.3" y="4.8" width="0.7" height="1" fill="#aaa"/><rect x="550.6" y="4.8" width="0.7" height="1" fill="#aaa"/><text x="556.1" y="8.3" text-anchor="middle">10</text><rect x="566.0" y="3.6" width="0.8" height="3" fill="#8a8a8a"/><rect x="561.0" y="4.8" width="0.7" height="1" fill="#aaa"/><rect x="571.3" y="4.8" width="0.7" height="1" fill="#aaa"/><text x="576.7" y="8.3" text-anchor="middle">11</text><rect x="586.7" y="3.6" width="0.8" height="3" fill="#8a8a8a"/><rect x="581.6" y="4.8" width="0.7" height="1" fill="#aaa"/><rect x="591.9" y="4.8" width="0.7" height="1" fill="#aaa"/><text x="597.4" y="8.3" text-anchor="middle">12</text><rect x="607.3" y="3.6" width="0.8" height="3" fill="#8a8a8a"/><rect x="602.2" y="4.8" width="0.7" height="1" fill="#aaa"/><rect x="612.6" y="4.8" width="0.7" height="1" fill="#aaa"/><text x="618.0" y="8.3" text-anchor="middle">13</text><rect x="627.9" y="3.6" width="0.8" height="3" fill="#8a8a8a"/><rect x="622.9" y="4.8" width="0.7" height="1" fill="#aaa"/><rect x="633.2" y="4.8" width="0.7" height="1" fill="#aaa"/><text x="638.7" y="8.3" text-anchor="middle">14</text><rect x="648.6" y="3.6" width="0.8" height="3" fill="#8a8a8a"/><rect x="643.5" y="4.8" width="0.7" height="1" fill="#aaa"/><rect x="653.8" y="4.8" width="0.7" height="1" fill="#aaa"/><text x="659.3" y="8.3" text-anchor="middle">15</text><rect x="669.2" y="3.6" width="0.8" height="3" fill="#8a8a8a"/><rect x="664.2" y="4.8" width="0.7" height="1" fill="#aaa"/><rect x="674.5" y="4.8" width="0.7" height="1" fill="#aaa"/><text x="679.9" y="8.3" text-anchor="middle">16</text></svg>
<div class="abs" style="left:374.6px;top:312.7px;width:10px;height:393px;background:#fafbfc;"></div>
<svg class="abs" style="left:374.6px;top:312.7px" width="10" height="393" viewBox="0 0 10 393" font-family="Liberation Sans, sans-serif" font-size="7.4" fill="#555"><text transform="translate(7.8,10.8) rotate(-90)" text-anchor="middle">9</text><rect x="3.6" y="20.8" width="3" height="0.8" fill="#8a8a8a"/><rect x="4.8" y="15.7" width="1" height="0.7" fill="#aaa"/><rect x="4.8" y="26.0" width="1" height="0.7" fill="#aaa"/><text transform="translate(7.8,31.5) rotate(-90)" text-anchor="middle">8</text><rect x="3.6" y="41.4" width="3" height="0.8" fill="#8a8a8a"/><rect x="4.8" y="36.3" width="1" height="0.7" fill="#aaa"/><rect x="4.8" y="46.7" width="1" height="0.7" fill="#aaa"/><text transform="translate(7.8,52.1) rotate(-90)" text-anchor="middle">7</text><rect x="3.6" y="62.0" width="3" height="0.8" fill="#8a8a8a"/><rect x="4.8" y="57.0" width="1" height="0.7" fill="#aaa"/><rect x="4.8" y="67.3" width="1" height="0.7" fill="#aaa"/><text transform="translate(7.8,72.8) rotate(-90)" text-anchor="middle">6</text><rect x="3.6" y="82.7" width="3" height="0.8" fill="#8a8a8a"/><rect x="4.8" y="77.6" width="1" height="0.7" fill="#aaa"/><rect x="4.8" y="87.9" width="1" height="0.7" fill="#aaa"/><text transform="translate(7.8,93.4) rotate(-90)" text-anchor="middle">5</text><rect x="3.6" y="103.3" width="3" height="0.8" fill="#8a8a8a"/><rect x="4.8" y="98.3" width="1" height="0.7" fill="#aaa"/><rect x="4.8" y="108.6" width="1" height="0.7" fill="#aaa"/><text transform="translate(7.8,114.0) rotate(-90)" text-anchor="middle">4</text><rect x="3.6" y="124.0" width="3" height="0.8" fill="#8a8a8a"/><rect x="4.8" y="118.9" width="1" height="0.7" fill="#aaa"/><rect x="4.8" y="129.2" width="1" height="0.7" fill="#aaa"/><text transform="translate(7.8,134.7) rotate(-90)" text-anchor="middle">3</text><rect x="3.6" y="144.6" width="3" height="0.8" fill="#8a8a8a"/><rect x="4.8" y="139.5" width="1" height="0.7" fill="#aaa"/><rect x="4.8" y="149.9" width="1" height="0.7" fill="#aaa"/><text transform="translate(7.8,155.3) rotate(-90)" text-anchor="middle">2</text><rect x="3.6" y="165.2" width="3" height="0.8" fill="#8a8a8a"/><rect x="4.8" y="160.2" width="1" height="0.7" fill="#aaa"/><rect x="4.8" y="170.5" width="1" height="0.7" fill="#aaa"/><text transform="translate(7.8,176.0) rotate(-90)" text-anchor="middle">1</text><rect x="3.6" y="185.9" width="3" height="0.8" fill="#8a8a8a"/><rect x="4.8" y="180.8" width="1" height="0.7" fill="#aaa"/><rect x="4.8" y="191.1" width="1" height="0.7" fill="#aaa"/><text transform="translate(7.8,196.6) rotate(-90)" text-anchor="middle">0</text><rect x="3.6" y="206.5" width="3" height="0.8" fill="#8a8a8a"/><rect x="4.8" y="201.5" width="1" height="0.7" fill="#aaa"/><rect x="4.8" y="211.8" width="1" height="0.7" fill="#aaa"/><text transform="translate(7.8,217.2) rotate(-90)" text-anchor="middle">1</text><rect x="3.6" y="227.2" width="3" height="0.8" fill="#8a8a8a"/><rect x="4.8" y="222.1" width="1" height="0.7" fill="#aaa"/><rect x="4.8" y="232.4" width="1" height="0.7" fill="#aaa"/><text transform="translate(7.8,237.9) rotate(-90)" text-anchor="middle">2</text><rect x="3.6" y="247.8" width="3" height="0.8" fill="#8a8a8a"/><rect x="4.8" y="242.7" width="1" height="0.7" fill="#aaa"/><rect x="4.8" y="253.1" width="1" height="0.7" fill="#aaa"/><text transform="translate(7.8,258.5) rotate(-90)" text-anchor="middle">3</text><rect x="3.6" y="268.4" width="3" height="0.8" fill="#8a8a8a"/><rect x="4.8" y="263.4" width="1" height="0.7" fill="#aaa"/><rect x="4.8" y="273.7" width="1" height="0.7" fill="#aaa"/><text transform="translate(7.8,279.2) rotate(-90)" text-anchor="middle">4</text><rect x="3.6" y="289.1" width="3" height="0.8" fill="#8a8a8a"/><rect x="4.8" y="284.0" width="1" height="0.7" fill="#aaa"/><rect x="4.8" y="294.3" width="1" height="0.7" fill="#aaa"/><text transform="translate(7.8,299.8) rotate(-90)" text-anchor="middle">5</text><rect x="3.6" y="309.7" width="3" height="0.8" fill="#8a8a8a"/><rect x="4.8" y="304.7" width="1" height="0.7" fill="#aaa"/><rect x="4.8" y="315.0" width="1" height="0.7" fill="#aaa"/><text transform="translate(7.8,320.4) rotate(-90)" text-anchor="middle">6</text><rect x="3.6" y="330.4" width="3" height="0.8" fill="#8a8a8a"/><rect x="4.8" y="325.3" width="1" height="0.7" fill="#aaa"/><rect x="4.8" y="335.6" width="1" height="0.7" fill="#aaa"/><text transform="translate(7.8,341.1) rotate(-90)" text-anchor="middle">7</text><rect x="3.6" y="351.0" width="3" height="0.8" fill="#8a8a8a"/><rect x="4.8" y="345.9" width="1" height="0.7" fill="#aaa"/><rect x="4.8" y="356.3" width="1" height="0.7" fill="#aaa"/><text transform="translate(7.8,361.7) rotate(-90)" text-anchor="middle">8</text><rect x="3.6" y="371.6" width="3" height="0.8" fill="#8a8a8a"/><rect x="4.8" y="366.6" width="1" height="0.7" fill="#aaa"/><rect x="4.8" y="376.9" width="1" height="0.7" fill="#aaa"/><text transform="translate(7.8,382.4) rotate(-90)" text-anchor="middle">9</text></svg>
<div class="abs" style="left:509.3px;top:312.7px;width:698.9px;height:393.0px;background:#dde8f6;box-shadow:0 0 0 1px #cfd8e6"></div>
<div class="abs" style="left:538.5px;top:398.2px;width:653.2px;height:298.2px;background:#fefefe;"></div>
<div class="t" style='left:552.3px;top:347.99px;font-size:24.2px;color:#1c1c1c;font-family:"Liberation Serif",serif;letter-spacing:0.584px;-webkit-text-stroke:0.35px #1c1c1c;'>1. Аналіз контингенту здобувачів у розрізі 5-ти років за</div>
<div class="t" style='left:729.6px;top:373.29px;font-size:24.2px;color:#1c1c1c;font-family:"Liberation Serif",serif;letter-spacing:0.854px;-webkit-text-stroke:0.35px #1c1c1c;'>ОПП (прийом-випуск)</div>
<div class="abs" style="left:793px;top:397px;width:118px;height:1.2px;background:#7fb08a;"></div>
<div class="abs" style="left:538.5px;top:433.35px;width:533.0px;height:1.3px;background:#2a2a2a;"></div>
<div class="abs" style="left:538.5px;top:448.75px;width:653.2px;height:1.3px;background:#2a2a2a;"></div>
<div class="abs" style="left:538.5px;top:464.35px;width:653.2px;height:1.3px;background:#2a2a2a;"></div>
<div class="abs" style="left:538.5px;top:495.2px;width:653.2px;height:1.4px;background:#2a2a2a;"></div>
<div class="abs" style="left:538.5px;top:525.8px;width:653.2px;height:1.4px;background:#2a2a2a;"></div>
<div class="abs" style="left:538.5px;top:571.8px;width:653.2px;height:1.4px;background:#2a2a2a;"></div>
<div class="abs" style="left:538.5px;top:617.9px;width:653.2px;height:1.4px;background:#2a2a2a;"></div>
<div class="abs" style="left:538.5px;top:664.3px;width:653.2px;height:1.4px;background:#2a2a2a;"></div>
<div class="abs" style="left:537.9px;top:695.6px;width:654.4px;height:1.6px;background:#2a2a2a;"></div>
<div class="abs" style="left:638.5px;top:479.95px;width:154.2px;height:1.1px;background:#444;"></div>
<div class="abs" style="left:911.2px;top:479.95px;width:280.5px;height:1.1px;background:#444;"></div>
<div class="abs" style="left:638.5px;top:510.65px;width:154.2px;height:1.1px;background:#444;"></div>
<div class="abs" style="left:911.2px;top:510.65px;width:280.5px;height:1.1px;background:#444;"></div>
<div class="abs" style="left:638.5px;top:556.45px;width:154.2px;height:1.1px;background:#444;"></div>
<div class="abs" style="left:911.2px;top:556.45px;width:280.5px;height:1.1px;background:#444;"></div>
<div class="abs" style="left:638.5px;top:602.95px;width:154.2px;height:1.1px;background:#444;"></div>
<div class="abs" style="left:911.2px;top:602.95px;width:280.5px;height:1.1px;background:#444;"></div>
<div class="abs" style="left:638.5px;top:649.45px;width:154.2px;height:1.1px;background:#444;"></div>
<div class="abs" style="left:911.2px;top:649.45px;width:280.5px;height:1.1px;background:#444;"></div>
<div class="abs" style="left:638.5px;top:680.15px;width:154.2px;height:1.1px;background:#444;"></div>
<div class="abs" style="left:911.2px;top:680.15px;width:280.5px;height:1.1px;background:#444;"></div>
<div class="abs" style="left:537.85px;top:434px;width:1.3px;height:262.4px;background:#2a2a2a;"></div>
<div class="abs" style="left:637.85px;top:449.4px;width:1.3px;height:247.0px;background:#2a2a2a;"></div>
<div class="abs" style="left:792.05px;top:434px;width:1.3px;height:262.4px;background:#2a2a2a;"></div>
<div class="abs" style="left:910.55px;top:449.4px;width:1.3px;height:247.0px;background:#2a2a2a;"></div>
<div class="abs" style="left:1070.85px;top:398.2px;width:1.3px;height:298.2px;background:#2a2a2a;"></div>
<div class="abs" style="left:1190.9px;top:398.2px;width:1.6px;height:298.2px;background:#2a2a2a;"></div>
<div class="t" style='left:546.4px;top:408.23px;font-size:10.3px;color:#303030;letter-spacing:-0.013px;'>Інформація по вступу та випуску здобувачів ОС магістр за спеціальністю 181 (G13) Харчові технології, ОПП</div>
<div class="t" style='left:656.6px;top:423.33px;font-size:10.3px;color:#303030;letter-spacing:0.201px;'>"Технології зберігання, консервування та переобки молока"</div>
<div class="t" style='left:1072.9px;top:419.63px;font-size:10.3px;color:#303030;letter-spacing:0.141px;'>Примітка по здобувачах</div>
<div class="t" style='left:651.0px;top:437.43px;font-size:10.3px;color:#303030;letter-spacing:0.084px;'>Вступ</div>
<div class="t" style='left:915.3px;top:437.43px;font-size:10.3px;color:#303030;letter-spacing:0.085px;'>Випуск</div>
<div class="t" style='left:540.1px;top:453.33px;font-size:10.3px;color:#303030;letter-spacing:0.083px;'>Рік та місяць вступу</div>
<div class="t" style='left:667.0px;top:453.33px;font-size:10.3px;color:#303030;letter-spacing:0.081px;'>Кількість здобувачів</div>
<div class="t" style='left:800.8px;top:453.33px;font-size:10.3px;color:#303030;letter-spacing:0.082px;'>Рік та місяць випуску</div>
<div class="t" style='left:942.7px;top:453.33px;font-size:10.3px;color:#303030;letter-spacing:0.081px;'>Кількість здобувачів</div>
<div class="t" style='left:543.7px;top:469.23px;font-size:10.3px;color:#303030;letter-spacing:0.091px;'>вересень-жовтень</div>
<div class="t" style='left:571.7px;top:484.43px;font-size:10.3px;color:#303030;letter-spacing:0.083px;'>2020р.</div>
<div class="t" style='left:540.8px;top:500.03px;font-size:10.3px;color:#303030;letter-spacing:0.086px;'>вересень - жовтень</div>
<div class="t" style='left:571.7px;top:515.33px;font-size:10.3px;color:#303030;letter-spacing:0.083px;'>2021р.</div>
<div class="t" style='left:543.7px;top:538.43px;font-size:10.3px;color:#303030;letter-spacing:0.091px;'>вересень-жовтень</div>
<div class="t" style='left:571.7px;top:554.33px;font-size:10.3px;color:#303030;letter-spacing:0.083px;'>2022р.</div>
<div class="t" style='left:543.7px;top:584.83px;font-size:10.3px;color:#303030;letter-spacing:0.091px;'>вересень-жовтень</div>
<div class="t" style='left:571.7px;top:600.83px;font-size:10.3px;color:#303030;letter-spacing:0.083px;'>2023р.</div>
<div class="t" style='left:547.6px;top:638.73px;font-size:10.3px;color:#303030;letter-spacing:0.091px;'>вересень 2024р.</div>
<div class="t" style='left:547.6px;top:677.73px;font-size:10.3px;color:#303030;letter-spacing:0.091px;'>вересень 2025р.</div>
<div class="t" style='left:648.9px;top:468.93px;font-size:10.3px;color:#303030;letter-spacing:0.090px;'>денна форма - 10 (бюджет)</div>
<div class="t" style='left:647.2px;top:484.43px;font-size:10.3px;color:#303030;letter-spacing:0.087px;'>заочна форма - 2 (контракт)</div>
<div class="t" style='left:651.8px;top:499.73px;font-size:10.3px;color:#303030;letter-spacing:0.091px;'>денна форма - 9 (бюджет)</div>
<div class="t" style='left:647.2px;top:515.13px;font-size:10.3px;color:#303030;letter-spacing:0.087px;'>заочна форма - 4 (контракт)</div>
<div class="t" style='left:643.1px;top:531.23px;font-size:10.3px;color:#303030;letter-spacing:0.086px;'>денна форма - 18 (бюджет), 2</div>
<div class="t" style='left:691.0px;top:546.03px;font-size:10.3px;color:#303030;letter-spacing:0.079px;'>(контракт)</div>
<div class="t" style='left:647.2px;top:561.03px;font-size:10.3px;color:#303030;letter-spacing:0.087px;'>заочна форма - 6 (контракт)</div>
<div class="t" style='left:646.0px;top:577.73px;font-size:10.3px;color:#303030;letter-spacing:0.086px;'>денна форма - 8 (бюджет), 7</div>
<div class="t" style='left:691.0px;top:592.83px;font-size:10.3px;color:#303030;letter-spacing:0.079px;'>(контракт)</div>
<div class="t" style='left:647.2px;top:607.73px;font-size:10.3px;color:#303030;letter-spacing:0.087px;'>заочна форма - 4 (контракт)</div>
<div class="t" style='left:646.0px;top:623.63px;font-size:10.3px;color:#303030;letter-spacing:0.086px;'>денна форма - 8 (бюджет), 1</div>
<div class="t" style='left:691.0px;top:638.73px;font-size:10.3px;color:#303030;letter-spacing:0.079px;'>(контракт)</div>
<div class="t" style='left:673.3px;top:653.83px;font-size:10.3px;color:#303030;letter-spacing:0.087px;'>заочна форма - 0</div>
<div class="t" style='left:651.8px;top:669.83px;font-size:10.3px;color:#303030;letter-spacing:0.091px;'>денна форма - 9 (бюджет)</div>
<div class="t" style='left:647.2px;top:684.63px;font-size:10.3px;color:#303030;letter-spacing:0.087px;'>заочна форма - 4 (контракт)</div>
<div class="t" style='left:819.4px;top:476.73px;font-size:10.3px;color:#303030;letter-spacing:0.092px;'>лютий 2022р.</div>
<div class="t" style='left:819.4px;top:507.13px;font-size:10.3px;color:#303030;letter-spacing:0.092px;'>лютий 2023р.</div>
<div class="t" style='left:819.4px;top:545.83px;font-size:10.3px;color:#303030;letter-spacing:0.092px;'>лютий 2024р.</div>
<div class="t" style='left:815.7px;top:592.33px;font-size:10.3px;color:#303030;letter-spacing:0.091px;'>грудень 2024р.</div>
<div class="t" style='left:815.7px;top:638.73px;font-size:10.3px;color:#303030;letter-spacing:0.091px;'>грудень 2025р.</div>
<div class="t" style='left:800.9px;top:669.83px;font-size:10.3px;color:#303030;letter-spacing:0.080px;'>грудень 2026р. (план</div>
<div class="t" style='left:831.6px;top:684.63px;font-size:10.3px;color:#303030;letter-spacing:0.077px;'>випуску)</div>
<div class="t" style='left:924.6px;top:468.93px;font-size:10.3px;color:#303030;letter-spacing:0.090px;'>денна форма - 10 (бюджет)</div>
<div class="t" style='left:922.9px;top:484.43px;font-size:10.3px;color:#303030;letter-spacing:0.087px;'>заочна форма - 2 (контракт)</div>
<div class="t" style='left:927.5px;top:499.73px;font-size:10.3px;color:#303030;letter-spacing:0.091px;'>денна форма - 8 (бюджет)</div>
<div class="t" style='left:922.9px;top:515.13px;font-size:10.3px;color:#303030;letter-spacing:0.087px;'>заочна форма - 3 (контракт)</div>
<div class="t" style='left:918.8px;top:531.23px;font-size:10.3px;color:#303030;letter-spacing:0.086px;'>денна форма - 16 (бюджет), 1</div>
<div class="t" style='left:966.7px;top:546.03px;font-size:10.3px;color:#303030;letter-spacing:0.079px;'>(контракт)</div>
<div class="t" style='left:922.9px;top:561.03px;font-size:10.3px;color:#303030;letter-spacing:0.087px;'>заочна форма - 5 (контракт)</div>
<div class="t" style='left:921.7px;top:577.73px;font-size:10.3px;color:#303030;letter-spacing:0.086px;'>денна форма - 6 (бюджет), 5</div>
<div class="t" style='left:966.7px;top:592.83px;font-size:10.3px;color:#303030;letter-spacing:0.079px;'>(контракт)</div>
<div class="t" style='left:922.9px;top:607.73px;font-size:10.3px;color:#303030;letter-spacing:0.087px;'>заочна форма - 1 (контракт)</div>
<div class="t" style='left:921.7px;top:623.63px;font-size:10.3px;color:#303030;letter-spacing:0.086px;'>денна форма - 5 (бюджет), 2</div>
<div class="t" style='left:966.7px;top:638.73px;font-size:10.3px;color:#303030;letter-spacing:0.079px;'>(контракт)</div>
<div class="t" style='left:949.0px;top:653.83px;font-size:10.3px;color:#303030;letter-spacing:0.087px;'>заочна форма - 0</div>
<div class="t" style='left:1084.1px;top:499.73px;font-size:10.3px;color:#303030;letter-spacing:0.081px;'>в т.ч. 2 з інших ЗВО</div>
<div class="t" style='left:1084.1px;top:515.13px;font-size:10.3px;color:#303030;letter-spacing:0.081px;'>в т.ч. 3 з інших ЗВО</div>
<div class="t" style='left:1082.1px;top:561.03px;font-size:10.3px;color:#303030;letter-spacing:0.073px;'>в т.ч. 1 з іншого ЗВО</div>
<div class="t" style='left:1084.1px;top:584.83px;font-size:10.3px;color:#303030;letter-spacing:0.081px;'>в т.ч. 3 з інших ЗВО</div>
<div class="t" style='left:1082.1px;top:607.73px;font-size:10.3px;color:#303030;letter-spacing:0.073px;'>в т.ч. 1 з іншого ЗВО</div>
<div class="t" style='left:1073.0px;top:623.63px;font-size:10.3px;color:#303030;letter-spacing:0.077px;'>в т.ч. 1 з іншого ЗВО, 1 -</div>
<div class="t" style='left:1076.3px;top:638.73px;font-size:10.3px;color:#303030;letter-spacing:0.089px;'>поновлений (контракт)</div>
<svg class="abs" style="left:509.3px;top:312.7px" width="698.9" height="393.0" fill="none" stroke="#8f98a8" stroke-width="0.9" stroke-dasharray="0.9 2.6" opacity="0.6"><path d="M19.5 0 V393.0"/><path d="M60.7 0 V393.0"/><path d="M102.0 0 V393.0"/><path d="M143.3 0 V393.0"/><path d="M184.6 0 V393.0"/><path d="M225.9 0 V393.0"/><path d="M267.1 0 V393.0"/><path d="M308.4 0 V393.0"/><path d="M349.7 0 V393.0"/><path d="M391.0 0 V393.0"/><path d="M432.3 0 V393.0"/><path d="M473.5 0 V393.0"/><path d="M514.8 0 V393.0"/><path d="M556.1 0 V393.0"/><path d="M597.4 0 V393.0"/><path d="M638.7 0 V393.0"/><path d="M679.9 0 V393.0"/><path d="M0 31.5 H698.9"/><path d="M0 72.8 H698.9"/><path d="M0 114.0 H698.9"/><path d="M0 155.3 H698.9"/><path d="M0 196.6 H698.9"/><path d="M0 237.9 H698.9"/><path d="M0 279.2 H698.9"/><path d="M0 320.4 H698.9"/><path d="M0 361.7 H698.9"/></svg>
<div class="abs" style="left:369px;top:717.2px;width:971.5px;height:1px;background:#d4d8df;"></div>
<div class="t" style='left:378.5px;top:724.47px;font-size:10.6px;color:#5c5c5c;letter-spacing:0.121px;'>Нажмите, чтобы добавить заметки</div>
<div class="abs" style="left:197px;top:742.6px;width:1143.5px;height:24.4px;background:#f5f5f5;"></div>
<div class="t" style='left:210.2px;top:752.20px;font-size:8px;color:#4a4a4a;letter-spacing:-0.276px;'>Слайд 3 из 13</div>
<svg class="abs" style="left:286px;top:750px" width="12" height="12" viewBox="0 0 12 12"><path d="M1 1.4 C2.6 0.6 4.2 0.8 5.6 1.8 V10.6 C4.2 9.6 2.6 9.4 1 10.2Z M5.6 1.8 C7 0.8 8.6 0.6 10.2 1.4 V6" fill="none" stroke="#555" stroke-width="1"/><path d="M7 7.4 L10.6 11 M10.6 7.4 L7 11" stroke="#555" stroke-width="1"/></svg>
<div class="t" style='left:317.6px;top:752.30px;font-size:8px;color:#4a4a4a;letter-spacing:-0.193px;'>украинский</div>
<svg class="abs" style="left:378.5px;top:749.5px" width="12" height="13" viewBox="0 0 12 13"><circle cx="6" cy="2" r="1.4" fill="none" stroke="#444" stroke-width="0.9"/><path d="M1 4.4 H11 M6 4.4 V8 M6 8 L3 12 M6 8 L9 12" fill="none" stroke="#444" stroke-width="1"/><path d="M7.6 9 L10.8 12.2 M10.8 9 L7.6 12.2" stroke="#444" stroke-width="0.8"/></svg>
<div class="t" style='left:392.2px;top:752.19px;font-size:8.2px;color:#222;font-weight:700;letter-spacing:-0.265px;'>Специальные возможности: проверьте рекомендации</div>
<svg class="abs" style="left:996px;top:749.5px" width="12" height="12" viewBox="0 0 12 12"><path d="M1 6.6 H11 M1 8.8 H11 M1 11 H11" stroke="#555" stroke-width="0.9"/><path d="M3.6 4.4 L6 1.6 L8.4 4.4" fill="none" stroke="#555" stroke-width="0.9"/></svg>
<div class="t" style='left:1009px;top:752.52px;font-size:7.6px;color:#4a4a4a;letter-spacing:-0.007px;'>Заметки</div>
<div class="abs" style="left:1058px;top:745px;width:30px;height:20.5px;background:#d9d9d9;"></div>
<svg class="abs" style="left:1066px;top:750px" width="12" height="11" viewBox="0 0 12 11"><rect x="0.8" y="0.8" width="10.4" height="8.6" fill="none" stroke="#444" stroke-width="1"/><path d="M0.8 3 H11.2 M3.4 3 V9.4" stroke="#444" stroke-width="0.9"/><rect x="4.8" y="4.4" width="5" height="3.4" fill="#777"/></svg>
<svg class="abs" style="left:1097.5px;top:750.5px" width="11" height="10" viewBox="0 0 11 10"><g fill="none" stroke="#555" stroke-width="0.9"><rect x="0.6" y="0.6" width="3.8" height="3.2"/><rect x="6.4" y="0.6" width="3.8" height="3.2"/><rect x="0.6" y="5.8" width="3.8" height="3.2"/><rect x="6.4" y="5.8" width="3.8" height="3.2"/></g></svg>
<svg class="abs" style="left:1127.5px;top:750px" width="12" height="11" viewBox="0 0 12 11"><path d="M6 1.6 C4.4 0.6 2.6 0.6 1 1.2 V9.6 C2.6 9 4.4 9 6 10 C7.6 9 9.4 9 11 9.6 V1.2 C9.4 0.6 7.6 0.6 6 1.6Z M6 1.6 V10" fill="none" stroke="#555" stroke-width="0.9"/><path d="M2.4 3.4 H4.6 M2.4 5.2 H4.6 M7.4 3.4 H9.6 M7.4 5.2 H9.6" stroke="#777" stroke-width="0.7"/></svg>
<svg class="abs" style="left:1158px;top:750px" width="12" height="11" viewBox="0 0 12 11"><rect x="1" y="0.8" width="10" height="6" fill="none" stroke="#555" stroke-width="0.9"/><path d="M6 6.8 V9.6 M3.6 10 H8.4" stroke="#555" stroke-width="0.9"/><rect x="4.4" y="2.4" width="3.2" height="2.6" fill="#777"/></svg>
<div class="abs" style="left:1184.5px;top:755.2px;width:5.4px;height:0.9px;background:#777;"></div>
<div class="abs" style="left:1194px;top:755.2px;width:75px;height:0.8px;background:#8a8a8a;"></div>
<div class="abs" style="left:1231.2px;top:752.6px;width:0.8px;height:6px;background:#8a8a8a;"></div>
<div class="abs" style="left:1219.6px;top:750.6px;width:2.8px;height:10px;background:#555;"></div>
<div class="abs" style="left:1271.8px;top:755.2px;width:5.6px;height:0.9px;background:#777;"></div>
<div class="abs" style="left:1274.2px;top:752.8px;width:0.9px;height:5.6px;background:#777;"></div>
<div class="t" style='left:1291.5px;top:752.63px;font-size:7.4px;color:#4a4a4a;letter-spacing:-0.266px;'>74%</div>
<svg class="abs" style="left:1322px;top:749.5px" width="13" height="13" viewBox="0 0 13 13"><circle cx="6.5" cy="6.5" r="3" fill="none" stroke="#555" stroke-width="0.9"/><path d="M6.5 0.6 V3.2 M6.5 9.8 V12.4 M0.6 6.5 H3.2 M9.8 6.5 H12.4 M5.2 1.8 L6.5 0.6 L7.8 1.8 M5.2 11.2 L6.5 12.4 L7.8 11.2 M1.8 5.2 L0.6 6.5 L1.8 7.8 M11.2 5.2 L12.4 6.5 L11.2 7.8" fill="none" stroke="#555" stroke-width="0.8"/></svg>
<div class="abs" style="left:0px;top:767.5px;width:1526px;height:59.5px;background:#000;"></div>
<div class="abs" style="left:0px;top:827px;width:1526px;height:2px;background:#dcdcdc;"></div>
<svg class="abs" style="left:30px;top:776px" width="26" height="28" viewBox="0 0 26 28"><rect x="8.6" y="2.4" width="8" height="14" rx="4" fill="none" stroke="#f2f2f2" stroke-width="1.5"/><path d="M5 12.4 C5 22 20.2 22 20.2 12.4 M12.6 19.8 V25 M8.4 25.4 H16.8" fill="none" stroke="#f2f2f2" stroke-width="1.5" stroke-linecap="round"/><path d="M3.2 24.6 L22.6 1.6" stroke="#e3265f" stroke-width="2.3" stroke-linecap="round"/></svg>
<svg class="abs" style="left:69.6px;top:786.2px" width="10" height="8" viewBox="0 0 10 8"><path d="M1.4 5.8 L5 2.2 L8.6 5.8" fill="none" stroke="#f0f0f0" stroke-width="1.7" stroke-linecap="round" stroke-linejoin="round"/></svg>
<div class="t" style='left:25.6px;top:808.30px;font-size:12px;color:#f4f4f4;font-weight:700;letter-spacing:-0.200px;'>Audio</div>
<div class="abs" style="left:87.5px;top:774.8px;width:99.3px;height:48.8px;border-radius:9px;background:#1d1d1d"></div>
<svg class="abs" style="left:123px;top:781px" width="26" height="18" viewBox="0 0 26 18"><rect x="2" y="2" width="17" height="14" rx="3.5" fill="none" stroke="#e8e8e8" stroke-width="1.6"/></svg>
<div class="t" style='left:120.9px;top:808.30px;font-size:12px;color:#e4e4e4;font-weight:700;letter-spacing:-0.094px;'>Video</div>
<div class="abs" style="left:129.7px;top:776.8px;width:110.6px;height:19.4px;background:#fdfdfd;border:1px solid #e0e0e0"></div>
<div class="t" style='left:134.7px;top:780.15px;font-size:13px;color:#3a3a3a;letter-spacing:-0.274px;'>Stop video (Alt+V)</div>
<svg class="abs" style="left:501px;top:780px" width="22" height="21" viewBox="0 0 22 21"><circle cx="6.2" cy="4.4" r="2.7" fill="none" stroke="#f2f2f2" stroke-width="1.5"/><circle cx="14.6" cy="8" r="3" fill="none" stroke="#f2f2f2" stroke-width="1.5"/><path d="M8.4 10.4 C2.6 9.2 1.4 12.6 1.6 15.4 C1.8 17.6 4.4 17.8 7 17.6" fill="none" stroke="#f2f2f2" stroke-width="1.5" stroke-linecap="round"/><rect x="9" y="13.4" width="11.4" height="5.8" rx="2.9" fill="none" stroke="#f2f2f2" stroke-width="1.5"/></svg>
<div class="t" style='left:529.5px;top:783.67px;font-size:10.6px;color:#b4b4b4;letter-spacing:-0.448px;'>10</div>
<svg class="abs" style="left:560.4px;top:786.2px" width="10" height="8" viewBox="0 0 10 8"><path d="M1.4 5.8 L5 2.2 L8.6 5.8" fill="none" stroke="#f0f0f0" stroke-width="1.7" stroke-linecap="round" stroke-linejoin="round"/></svg>
<div class="t" style='left:480.2px;top:808.30px;font-size:12px;color:#f4f4f4;font-weight:700;letter-spacing:-0.375px;'>Participants</div>
<svg class="abs" style="left:610px;top:778px" width="27" height="25" viewBox="0 0 27 25"><path d="M8.4 6.6 V5.4 C8.4 3.4 9.8 2 11.8 2 H21 C23 2 24.4 3.4 24.4 5.4 V11.6 C24.4 13.6 23.2 14.8 21.4 15" fill="none" stroke="#f2f2f2" stroke-width="1.5" stroke-linecap="round"/><path d="M5.8 7 H16.8 C18.8 7 20.2 8.4 20.2 10.4 V15.8 C20.2 17.8 18.8 19.2 16.8 19.2 H10.4 L6.4 22.6 V19.2 H5.8 C3.8 19.2 2.4 17.8 2.4 15.8 V10.4 C2.4 8.4 3.8 7 5.8 7Z" fill="none" stroke="#f2f2f2" stroke-width="1.5" stroke-linejoin="round"/><circle cx="7.6" cy="13.2" r="1.1" fill="#f2f2f2"/><circle cx="11.3" cy="13.2" r="1.1" fill="#f2f2f2"/><circle cx="15" cy="13.2" r="1.1" fill="#f2f2f2"/></svg>
<svg class="abs" style="left:652.1px;top:786.2px" width="10" height="8" viewBox="0 0 10 8"><path d="M1.4 5.8 L5 2.2 L8.6 5.8" fill="none" stroke="#f0f0f0" stroke-width="1.7" stroke-linecap="round" stroke-linejoin="round"/></svg>
<div class="t" style='left:612px;top:808.30px;font-size:12px;color:#f4f4f4;font-weight:700;letter-spacing:-0.443px;'>Chat</div>
<svg class="abs" style="left:697px;top:779px" width="28" height="23" viewBox="0 0 28 23"><path d="M13.6 20.4 C8 17 2.4 12.6 2.4 7.6 C2.4 2.2 9.6 0.4 13.4 5.6 C17.6 0.4 25.2 2.6 25 8 C24.8 13 19 17.4 13.6 20.4Z" fill="none" stroke="#f2f2f2" stroke-width="1.6" stroke-linejoin="round" transform="rotate(-8 14 11)"/></svg>
<svg class="abs" style="left:733.4px;top:786.2px" width="10" height="8" viewBox="0 0 10 8"><path d="M1.4 5.8 L5 2.2 L8.6 5.8" fill="none" stroke="#f0f0f0" stroke-width="1.7" stroke-linecap="round" stroke-linejoin="round"/></svg>
<div class="t" style='left:695.4px;top:808.30px;font-size:12px;color:#f4f4f4;font-weight:700;letter-spacing:-0.517px;'>React</div>
<div class="abs" style="left:789px;top:780.2px;width:24.4px;height:20.2px;border-radius:3.5px;background:#23e283"></div>
<svg class="abs" style="left:794px;top:783px" width="14" height="15" viewBox="0 0 14 15"><path d="M7 13 V3.4 M2.8 7.4 L7 3 L11.2 7.4" fill="none" stroke="#0a0a0a" stroke-width="2.6" stroke-linejoin="miter"/></svg>
<div class="t" style='left:785.8px;top:808.30px;font-size:12px;color:#f4f4f4;font-weight:700;letter-spacing:-0.432px;'>Share</div>
<svg class="abs" style="left:879px;top:778px" width="25" height="24" viewBox="0 0 25 24"><path d="M3 10.4 V6.6 C3 4.2 4.4 2.8 6.8 2.8 H10.6" fill="none" stroke="#f2f2f2" stroke-width="1.6" stroke-linecap="round"/><path d="M22 13.8 V17.6 C22 20 20.6 21.4 18.2 21.4 H14.4" fill="none" stroke="#f2f2f2" stroke-width="1.6" stroke-linecap="round"/><circle cx="18.6" cy="6.2" r="3.6" fill="none" stroke="#f2f2f2" stroke-width="1.6"/><circle cx="6.4" cy="17.8" r="3.6" fill="none" stroke="#f2f2f2" stroke-width="1.6"/></svg>
<div class="t" style='left:878.3px;top:808.30px;font-size:12px;color:#f4f4f4;font-weight:700;letter-spacing:-0.600px;'>Apps</div>
<svg class="abs" style="left:968px;top:778px" width="28" height="24" viewBox="0 0 28 24"><path d="M12 20.4 H5.6 C3.8 20.4 2.8 19.4 2.8 17.6 V5.4 C2.8 3.6 3.8 2.6 5.6 2.6 H22.6 C24.4 2.6 25.4 3.6 25.4 5.4 V15" fill="none" stroke="#f2f2f2" stroke-width="1.6" stroke-linecap="round"/><rect x="13.4" y="17.2" width="13" height="4.6" rx="2.3" fill="#f2f2f2"/></svg>
<div class="t" style='left:947.8px;top:808.30px;font-size:12px;color:#f4f4f4;font-weight:700;letter-spacing:-0.243px;'>Whiteboards</div>
<svg class="abs" style="left:1060px;top:777px" width="26" height="26" viewBox="0 0 26 26"><circle cx="12.8" cy="12.9" r="10.8" fill="none" stroke="#f2f2f2" stroke-width="1.6"/><circle cx="12.8" cy="12.9" r="4.6" fill="#f2f2f2"/></svg>
<div class="t" style='left:1054px;top:808.30px;font-size:12px;color:#f4f4f4;font-weight:700;letter-spacing:-0.557px;'>Record</div>
<svg class="abs" style="left:1142px;top:777px" width="26" height="26" viewBox="0 0 26 26"><circle cx="12.9" cy="12.9" r="11" fill="none" stroke="#f2f2f2" stroke-width="1.6"/><circle cx="7.6" cy="12.9" r="1.3" fill="#f2f2f2"/><circle cx="12.9" cy="12.9" r="1.3" fill="#f2f2f2"/><circle cx="18.2" cy="12.9" r="1.3" fill="#f2f2f2"/></svg>
<div class="t" style='left:1140px;top:808.30px;font-size:12px;color:#f4f4f4;font-weight:700;letter-spacing:0.157px;'>More</div>
<svg class="abs" style="left:1485px;top:776px" width="28" height="28" viewBox="0 0 28 28"><path d="M18.4 2 H26 V21.6 L19 25.6 V6.4 L25.4 2.4" fill="none" stroke="#d81c52" stroke-width="1.5" stroke-linejoin="round"/><circle cx="10.2" cy="7" r="2.7" fill="none" stroke="#f2f2f2" stroke-width="1.5"/><path d="M8 11.4 C6 11.6 3.6 13.4 2.6 16 L4.4 17.2 L7 14.6 L6.6 19.2 L2.6 25.4 L5 26.6 L9.4 21 L10.6 26 L13.6 25.6 L12.6 18.4 L13.2 15 L15.2 17 L16.6 15.4 L12.8 11.6Z" fill="none" stroke="#f2f2f2" stroke-width="1.4" stroke-linejoin="round"/></svg>
<div class="t" style='left:1482.6px;top:808.30px;font-size:12px;color:#f4f4f4;font-weight:700;letter-spacing:-0.526px;'>Leave</div>
<div class="abs" style="left:8px;top:712.5px;width:32px;height:32px;border-radius:16px;background:#242a2c"></div>
<svg class="abs" style="left:15px;top:718px" width="19" height="21" viewBox="0 0 19 21"><path d="M12.4 2.4 L16 6 L7.4 14.6 L3.2 15.4 L4 11.2Z M10.6 4.4 L14 7.8" fill="none" stroke="#1fbf8a" stroke-width="1.5" stroke-linejoin="round"/><path d="M3 18.6 H14.6" stroke="#1fbf8a" stroke-width="1.5" stroke-linecap="round"/></svg>
<svg class="abs" style="left:195.5px;top:727px" width="9" height="13" viewBox="0 0 9 13"><path d="M1 0.8 V10.6 L3.4 8.4 L5.2 12 L6.6 11.4 L4.8 7.8 H8Z" fill="#fff" stroke="#333" stroke-width="0.8"/></svg>
</div>
</body>
</html>
